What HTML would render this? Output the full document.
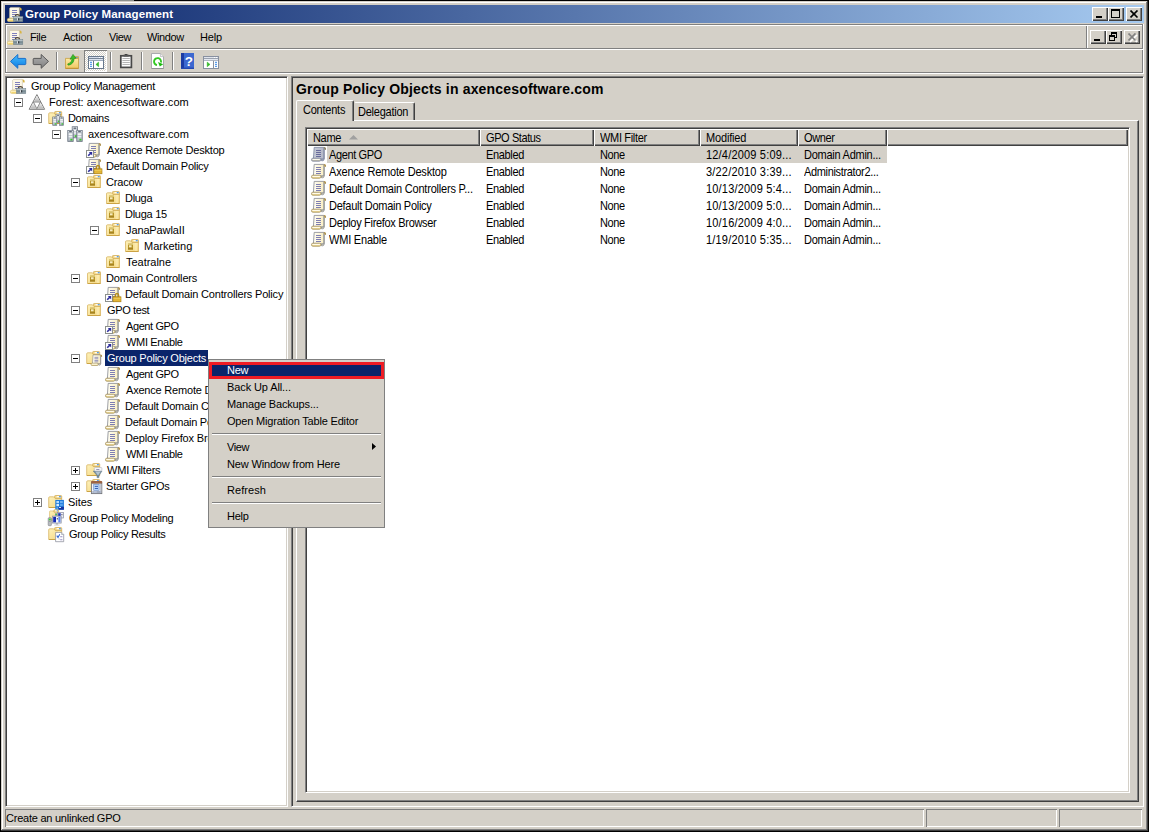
<!DOCTYPE html>
<html lang="en"><head><meta charset="utf-8"><title>Group Policy Management</title>
<style>
html,body{margin:0;padding:0}
body{width:1149px;height:832px;background:#000;position:relative;overflow:hidden;font-family:"Liberation Sans",sans-serif;font-size:11px;color:#000}
div,span.t,i,.ic{position:absolute}
i{display:block}
.ic svg{display:block;overflow:visible}
.t{white-space:pre;display:block}
.ui{font-size:11px}
.ls{font-size:11px;transform:scaleY(1.125);transform-origin:0 12.4px}
.tb{font-size:11.5px;font-weight:bold}
.hd{font-size:14px;font-weight:bold}
</style></head>
<body>
<div style="left:1px;top:1px;width:1147px;height:830px;background:#d4d0c8"></div>
<div style="left:1px;top:1px;width:1146px;height:1px;background:#d4d0c8"></div>
<div style="left:1px;top:1px;width:1px;height:829px;background:#d4d0c8"></div>
<div style="left:2px;top:2px;width:1144px;height:1px;background:#ffffff"></div>
<div style="left:2px;top:2px;width:1px;height:827px;background:#ffffff"></div>
<div style="left:1px;top:830px;width:1147px;height:1px;background:#404040"></div>
<div style="left:1147px;top:1px;width:1px;height:830px;background:#404040"></div>
<div style="left:2px;top:829px;width:1145px;height:1px;background:#808080"></div>
<div style="left:1146px;top:2px;width:1px;height:828px;background:#808080"></div>
<div style="left:110px;top:0px;width:24px;height:1px;background:#8e928e"></div>
<div style="left:5px;top:5px;width:1139px;height:18px;background:linear-gradient(to right,#0a246a,#a6caf0)"></div>
<div class="ic" style="left:7px;top:7px"><svg width="16" height="16" viewBox="0 0 16 16" ><path d="M2.6,1.2 L3.6,0.4 L12.4,0.4 L12.4,11 L2.6,11 Z" fill="#fdf8e6" stroke="#c8c0a4" stroke-width="0.6"/><path d="M12.5,0.6 Q15,0.4 14.6,3.4 L13.2,3.6 Z" fill="#d8b444"/><rect x="5" y="3" width="5" height="1" fill="#8080bc" /><rect x="5" y="5" width="5" height="1" fill="#8080bc" /><rect x="5" y="7" width="5" height="1" fill="#8080bc" /><rect x="5" y="9" width="5" height="1" fill="#8080bc" /><rect x="0.3" y="11.3" width="8" height="3.2" rx="1.5" fill="#fbeeb8" stroke="#d8c070" stroke-width="0.6"/><rect x="1.4" y="13.2" width="5" height="0.9" fill="#f0d060" /><path d="M8.2,9.4 Q8.4,7.7 10.4,7.7 Q12.4,7.7 12.6,9.4" fill="none" stroke="#4c4030" stroke-width="1.2"/><rect x="6.4" y="9.6" width="9.4" height="5" fill="#8c9ca4" stroke="#6c7c84" stroke-width="0.5"/><rect x="6.6" y="9.8" width="9" height="1.3" fill="#b4c0c6" /><rect x="6.6" y="11.6" width="9" height="1" fill="#70828a" /><rect x="10.2" y="11.2" width="1" height="2.2" fill="#f8f8f8" /><rect x="11.2" y="11.2" width="1" height="2.2" fill="#202428" /></svg></div>
<span class="t tb" style="left:25px;top:5px;height:18px;line-height:18px;letter-spacing:0.136px;color:#fff;">Group Policy Management</span>
<div style="left:1092px;top:7px;width:16px;height:14px;background:#d4d0c8;box-shadow:inset 1px 1px 0 #ffffff,inset -1px -1px 0 #404040,inset -2px -2px 0 #808080"><i style="left:4px;top:9px;width:6px;height:2px;background:#000"></i></div>
<div style="left:1108px;top:7px;width:16px;height:14px;background:#d4d0c8;box-shadow:inset 1px 1px 0 #ffffff,inset -1px -1px 0 #404040,inset -2px -2px 0 #808080"><i style="left:3px;top:2px;width:9px;height:9px;box-sizing:border-box;border:1px solid #000;border-top-width:2px"></i></div>
<div style="left:1126px;top:7px;width:16px;height:14px;background:#d4d0c8;box-shadow:inset 1px 1px 0 #ffffff,inset -1px -1px 0 #404040,inset -2px -2px 0 #808080"><svg style="position:absolute;left:4px;top:3px" width="10" height="10" viewBox="0 0 10 10"><path d="M0.5,0.5 L7.5,7.5 M7.5,0.5 L0.5,7.5" stroke="#000" stroke-width="1.7"/></svg></div>
<div style="left:1090px;top:30px;width:16px;height:14px;background:#d4d0c8;box-shadow:inset 1px 1px 0 #ffffff,inset -1px -1px 0 #404040,inset -2px -2px 0 #808080"><i style="left:4px;top:9px;width:6px;height:2px;background:#000"></i></div>
<div style="left:1106px;top:30px;width:16px;height:14px;background:#d4d0c8;box-shadow:inset 1px 1px 0 #ffffff,inset -1px -1px 0 #404040,inset -2px -2px 0 #808080"><i style="left:5px;top:2px;width:6px;height:6px;box-sizing:border-box;border:1px solid #000;border-top-width:2px"></i><i style="left:3px;top:5px;width:6px;height:6px;box-sizing:border-box;border:1px solid #000;border-top-width:2px;background:#d4d0c8"></i></div>
<div style="left:1124px;top:30px;width:16px;height:14px;background:#d4d0c8;box-shadow:inset 1px 1px 0 #ffffff,inset -1px -1px 0 #404040,inset -2px -2px 0 #808080"><svg style="position:absolute;left:4px;top:3px" width="10" height="10" viewBox="0 0 10 10"><path d="M1,1 L8,8 M8,1 L1,8" stroke="#fff" stroke-width="1.6" transform="translate(1,1)"/><path d="M0.5,0.5 L7.5,7.5 M7.5,0.5 L0.5,7.5" stroke="#808080" stroke-width="1.7"/></svg></div>
<div style="left:5px;top:24px;width:1139px;height:1px;background:#808080"></div>
<div style="left:6px;top:25px;width:1137px;height:1px;background:#ffffff"></div>
<div style="left:5px;top:24px;width:1px;height:50px;background:#808080"></div>
<div style="left:6px;top:25px;width:1px;height:48px;background:#ffffff"></div>
<div style="left:1142px;top:25px;width:1px;height:48px;background:#808080"></div>
<div style="left:1143px;top:24px;width:1px;height:50px;background:#ffffff"></div>
<div style="left:6px;top:48px;width:1137px;height:1px;background:#808080"></div>
<div style="left:6px;top:49px;width:1137px;height:1px;background:#ffffff"></div>
<div style="left:6px;top:72px;width:1137px;height:1px;background:#808080"></div>
<div style="left:5px;top:73px;width:1139px;height:1px;background:#ffffff"></div>
<div style="left:1086px;top:26px;width:1px;height:22px;background:#808080"></div>
<div style="left:1087px;top:26px;width:1px;height:22px;background:#ffffff"></div>
<div class="ic" style="left:7px;top:30px"><svg width="16" height="16" viewBox="0 0 16 16" ><path d="M2.6,1.2 L3.6,0.4 L12.4,0.4 L12.4,11 L2.6,11 Z" fill="#fdf8e6" stroke="#c8c0a4" stroke-width="0.6"/><path d="M12.5,0.6 Q15,0.4 14.6,3.4 L13.2,3.6 Z" fill="#d8b444"/><rect x="5" y="3" width="5" height="1" fill="#8080bc" /><rect x="5" y="5" width="5" height="1" fill="#8080bc" /><rect x="5" y="7" width="5" height="1" fill="#8080bc" /><rect x="5" y="9" width="5" height="1" fill="#8080bc" /><rect x="0.3" y="11.3" width="8" height="3.2" rx="1.5" fill="#fbeeb8" stroke="#d8c070" stroke-width="0.6"/><rect x="1.4" y="13.2" width="5" height="0.9" fill="#f0d060" /><path d="M8.2,9.4 Q8.4,7.7 10.4,7.7 Q12.4,7.7 12.6,9.4" fill="none" stroke="#4c4030" stroke-width="1.2"/><rect x="6.4" y="9.6" width="9.4" height="5" fill="#8c9ca4" stroke="#6c7c84" stroke-width="0.5"/><rect x="6.6" y="9.8" width="9" height="1.3" fill="#b4c0c6" /><rect x="6.6" y="11.6" width="9" height="1" fill="#70828a" /><rect x="10.2" y="11.2" width="1" height="2.2" fill="#f8f8f8" /><rect x="11.2" y="11.2" width="1" height="2.2" fill="#202428" /></svg></div>
<span class="t ui" style="left:30px;top:29px;height:16px;line-height:16px;letter-spacing:-0.400px;">File</span>
<span class="t ui" style="left:63px;top:29px;height:16px;line-height:16px;letter-spacing:-0.240px;">Action</span>
<span class="t ui" style="left:109px;top:29px;height:16px;line-height:16px;letter-spacing:-0.400px;">View</span>
<span class="t ui" style="left:147px;top:29px;height:16px;line-height:16px;letter-spacing:-0.400px;">Window</span>
<span class="t ui" style="left:200px;top:29px;height:16px;line-height:16px;letter-spacing:-0.200px;">Help</span>
<div class="ic" style="left:10px;top:54px"><svg width="17" height="15" viewBox="0 0 17 15" ><defs><linearGradient id="al48bcfc" x1="0" y1="0" x2="0" y2="1"><stop offset="0" stop-color="#48bcfc"/><stop offset="1" stop-color="#0a7ce4"/></linearGradient></defs><path d="M0.5,7.4 L7.8,0.5 L7.8,4.4 L15,4.4 Q15.8,4.4 15.8,5.2 L15.8,9.8 Q15.8,10.6 15,10.6 L7.8,10.6 L7.8,14.3 Z" fill="url(#al48bcfc)" stroke="#1870cc" stroke-width="1" stroke-linejoin="round"/></svg></div>
<div class="ic" style="left:32px;top:54px"><svg width="17" height="15" viewBox="0 0 17 15" ><g transform="translate(17,0) scale(-1,1)"><defs><linearGradient id="alb0b0b0" x1="0" y1="0" x2="0" y2="1"><stop offset="0" stop-color="#b0b0b0"/><stop offset="1" stop-color="#808080"/></linearGradient></defs><path d="M0.5,7.4 L7.8,0.5 L7.8,4.4 L15,4.4 Q15.8,4.4 15.8,5.2 L15.8,9.8 Q15.8,10.6 15,10.6 L7.8,10.6 L7.8,14.3 Z" fill="url(#alb0b0b0)" stroke="#585858" stroke-width="1" stroke-linejoin="round"/></g></svg></div>
<div style="left:56px;top:52px;width:1px;height:18px;background:#808080"></div>
<div style="left:57px;top:52px;width:1px;height:18px;background:#ffffff"></div>
<div class="ic" style="left:65px;top:54px"><svg width="14" height="15" viewBox="0 0 14 15" ><defs><linearGradient id="uf" x1="0" y1="0" x2="0" y2="1"><stop offset="0" stop-color="#fce9a4"/><stop offset="1" stop-color="#f0c860"/></linearGradient></defs><path d="M8,2.6 L13.5,2.6 L13.5,5 L8,5 Z" fill="#e8c460" stroke="#c09838" stroke-width="0.6"/><rect x="10.4" y="3.2" width="2.4" height="1" fill="#5090e0" /><path d="M0.5,4.4 L13.5,4.4 L13.5,14.5 L0.5,14.5 Z" fill="url(#uf)" stroke="#c8a040" stroke-width="0.8"/><rect x="0.6" y="13.8" width="12.8" height="1" fill="#c09030" /><path d="M2.6,10 Q6.6,9.4 7.2,4.8 L5,5.2 L8,0.4 L11,4.2 L9.2,4.4 Q8.8,10.2 3.4,11.2 Z" fill="#38c028" stroke="#208818" stroke-width="0.6"/></svg></div>
<div style="left:84px;top:50px;width:23px;height:22px;background:conic-gradient(#fff 25%,#d4d0c8 0 50%,#fff 0 75%,#d4d0c8 0) 0 0/2px 2px;box-shadow:inset 1px 1px 0 #808080,inset -1px -1px 0 #ffffff"></div>
<div class="ic" style="left:88px;top:56px"><svg width="16" height="13" viewBox="0 0 16 13" ><rect x="0.5" y="0.5" width="15" height="12" fill="#ffffff" stroke="#68788c" stroke-width="1"/><rect x="1" y="1" width="14" height="1.2" fill="#d4dcec" /><rect x="1" y="2.1" width="14" height="0.9" fill="#68788c" /><rect x="11" y="1" width="1" height="1" fill="#ffffff" /><rect x="13" y="1" width="1" height="1" fill="#ffffff" /><rect x="1" y="3" width="14" height="1" fill="#dce4f0" /><rect x="1" y="4" width="14" height="0.8" fill="#8494ac" /><rect x="5" y="4.8" width="1" height="7.4" fill="#68788c" /><rect x="2" y="5.8" width="2" height="1" fill="#3484e4" /><rect x="2" y="7.8" width="2" height="1" fill="#3484e4" /><rect x="2" y="9.8" width="2" height="1" fill="#3484e4" /><path d="M10.6,6.1 L10.6,10.7 L7.9,8.4 Z" fill="#34b828" stroke="#34b828" stroke-width="0.5" stroke-linejoin="round"/></svg></div>
<div style="left:110px;top:52px;width:1px;height:18px;background:#808080"></div>
<div style="left:111px;top:52px;width:1px;height:18px;background:#ffffff"></div>
<div class="ic" style="left:120px;top:54px"><svg width="12" height="14" viewBox="0 0 12 14" ><rect x="0.8" y="1.8" width="10.6" height="11.6" fill="#fcfcfc" stroke="#484848" stroke-width="1.7"/><rect x="3.6" y="0.6" width="5" height="2" fill="#585858" /><rect x="4.8" y="0" width="2.6" height="1" fill="#404040" /><rect x="2.4" y="4" width="7.4" height="1" fill="#b4b4b4" /><rect x="2.4" y="6" width="7.4" height="1" fill="#b4b4b4" /><rect x="2.4" y="8" width="7.4" height="1" fill="#b4b4b4" /><rect x="2.4" y="10" width="7.4" height="1" fill="#b4b4b4" /></svg></div>
<div style="left:141px;top:52px;width:1px;height:18px;background:#808080"></div>
<div style="left:142px;top:52px;width:1px;height:18px;background:#ffffff"></div>
<div class="ic" style="left:151px;top:53px"><svg width="13" height="16" viewBox="0 0 13 16" ><path d="M0.5,0.5 L9.4,0.5 L12.5,3.6 L12.5,15.5 L0.5,15.5 Z" fill="#ffffff" stroke="#a4a4a8" stroke-width="0.9"/><path d="M9.4,0.5 L9.4,3.6 L12.5,3.6" fill="#f0f0f0" stroke="#b0b0b4" stroke-width="0.7"/><rect x="0.6" y="15" width="12" height="0.9" fill="#8c8c90" /><path d="M6.0,12.05 A3.5,3.5 0 1 1 9.9,9.6" fill="none" stroke="#34c824" stroke-width="1.9"/><path d="M7.0,9.0 L12.2,11.2 L8.8,13.4 Z" fill="#1cb810"/></svg></div>
<div style="left:172px;top:52px;width:1px;height:18px;background:#808080"></div>
<div style="left:173px;top:52px;width:1px;height:18px;background:#ffffff"></div>
<div class="ic" style="left:181px;top:53px"><svg width="13" height="16" viewBox="0 0 13 16" ><rect x="0" y="0" width="13" height="16" fill="#3c68d0" /><rect x="0" y="0" width="3" height="16" fill="#1c3ca4" /><rect x="0" y="14.6" width="13" height="1.4" fill="#2448b0" /><text x="7.8" y="12.6" font-family="Liberation Sans, sans-serif" font-weight="bold" font-size="13.5" fill="#ffffff" text-anchor="middle">?</text></svg></div>
<div class="ic" style="left:203px;top:56px"><svg width="16" height="13" viewBox="0 0 16 13" ><rect x="0.5" y="0.5" width="15" height="12" fill="#ffffff" stroke="#8890a0" stroke-width="1"/><rect x="1" y="1" width="14" height="1.2" fill="#e0e4ec" /><rect x="1" y="2.1" width="14" height="0.9" fill="#9098a8" /><rect x="11" y="1" width="1" height="1" fill="#ffffff" /><rect x="13" y="1" width="1" height="1" fill="#ffffff" /><rect x="1" y="3" width="14" height="1" fill="#e4e8f0" /><rect x="1" y="4" width="14" height="0.8" fill="#a0a8b8" /><rect x="10" y="4.8" width="1" height="7.4" fill="#8890a0" /><rect x="12" y="5.8" width="2" height="1" fill="#3484e4" /><rect x="12" y="7.8" width="2" height="1" fill="#3484e4" /><rect x="12" y="9.8" width="2" height="1" fill="#3484e4" /><path d="M4.2,6.1 L4.2,10.7 L7,8.4 Z" fill="#34b828" stroke="#34b828" stroke-width="0.5" stroke-linejoin="round"/></svg></div>
<div style="left:5px;top:76px;width:283px;height:731px;background:#fff;box-sizing:border-box;border:1px solid;border-color:#808080 #ffffff #ffffff #808080;box-shadow:inset 1px 1px 0 #404040,inset -1px -1px 0 #d4d0c8"></div>
<div class="ic" style="left:10px;top:79px"><svg width="16" height="16" viewBox="0 0 16 16" ><path d="M2.6,1.2 L3.6,0.4 L12.4,0.4 L12.4,11 L2.6,11 Z" fill="#fdf8e6" stroke="#c8c0a4" stroke-width="0.6"/><path d="M12.5,0.6 Q15,0.4 14.6,3.4 L13.2,3.6 Z" fill="#d8b444"/><rect x="5" y="3" width="5" height="1" fill="#8080bc" /><rect x="5" y="5" width="5" height="1" fill="#8080bc" /><rect x="5" y="7" width="5" height="1" fill="#8080bc" /><rect x="5" y="9" width="5" height="1" fill="#8080bc" /><rect x="0.3" y="11.3" width="8" height="3.2" rx="1.5" fill="#fbeeb8" stroke="#d8c070" stroke-width="0.6"/><rect x="1.4" y="13.2" width="5" height="0.9" fill="#f0d060" /><path d="M8.2,9.4 Q8.4,7.7 10.4,7.7 Q12.4,7.7 12.6,9.4" fill="none" stroke="#4c4030" stroke-width="1.2"/><rect x="6.4" y="9.6" width="9.4" height="5" fill="#8c9ca4" stroke="#6c7c84" stroke-width="0.5"/><rect x="6.6" y="9.8" width="9" height="1.3" fill="#b4c0c6" /><rect x="6.6" y="11.6" width="9" height="1" fill="#70828a" /><rect x="10.2" y="11.2" width="1" height="2.2" fill="#f8f8f8" /><rect x="11.2" y="11.2" width="1" height="2.2" fill="#202428" /></svg></div>
<span class="t ui" style="left:31px;top:78px;height:16px;line-height:16px;letter-spacing:-0.273px;">Group Policy Management</span>
<div style="left:14px;top:98px;width:9px;height:9px;box-sizing:border-box;border:1px solid #808080;background:#fff"><i style="left:1px;top:3px;width:5px;height:1px;background:#000"></i></div>
<div class="ic" style="left:29px;top:94px"><svg width="16" height="16" viewBox="0 0 16 16" ><defs><linearGradient id="tg" x1="0" y1="0" x2="0" y2="1"><stop offset="0" stop-color="#f6f6f6"/><stop offset="1" stop-color="#b4b4b4"/></linearGradient></defs><path d="M7.9,0.6 L15.6,15.3 L0.2,15.3 Z" fill="#ffffff" stroke="#787878" stroke-width="1" stroke-linejoin="round"/><path d="M7.9,1.8 L10.9,7.5 L4.9,7.5 Z" fill="url(#tg)"/><path d="M4.3,8.6 L7.3,14.7 L1.2,14.7 Z" fill="url(#tg)"/><path d="M11.5,8.6 L14.6,14.7 L8.5,14.7 Z" fill="url(#tg)"/><path d="M4.4,8 L11.4,8 L7.9,14.8 Z" fill="#ffffff" stroke="#7c7c7c" stroke-width="0.9" stroke-linejoin="round"/></svg></div>
<span class="t ui" style="left:49px;top:94px;height:16px;line-height:16px;letter-spacing:0.064px;">Forest: axencesoftware.com</span>
<div style="left:33px;top:114px;width:9px;height:9px;box-sizing:border-box;border:1px solid #808080;background:#fff"><i style="left:1px;top:3px;width:5px;height:1px;background:#000"></i></div>
<div class="ic" style="left:48px;top:110px"><svg width="16" height="16" viewBox="0 0 16 16" ><defs><linearGradient id="fg" x1="0" y1="0" x2="1" y2="1"><stop offset="0" stop-color="#fef2bc"/><stop offset="1" stop-color="#f4d67e"/></linearGradient></defs><g transform="translate(0.2,1)"><path d="M6.4,3.4 L6.4,1.2 Q6.4,0.5 7.2,0.5 L12.6,0.5 Q13.5,0.5 13.5,1.4 L13.5,3.6 Z" fill="#f3d684" stroke="#cfa850" stroke-width="0.7"/><rect x="8.4" y="1.1" width="4.2" height="1.2" fill="#ffffff" /><rect x="10.8" y="1.1" width="1.9" height="1.2" fill="#4a94e6" /><path d="M0.5,2.8 Q0.5,1.8 1.5,1.8 L5.4,1.8 L7,3.5 L13.5,3.5 L13.5,12.5 L0.5,12.5 Z" fill="url(#fg)" stroke="#d3ac54" stroke-width="0.7"/><rect x="9.6" y="4" width="2.4" height="8" fill="#fff4c8" opacity="0.45"/><rect x="0.8" y="12.1" width="12.6" height="0.9" fill="#c9a040" /></g><g transform="translate(4.4,4.2) scale(0.76)"><rect x="4.8" y="0" width="5.4" height="11" fill="#bcc4cc" stroke="#66707c" stroke-width="0.8"/><rect x="5.2" y="0.4" width="4.6" height="1.4" fill="#dfe3e8" /><rect x="6.199999999999999" y="0.9" width="2.6" height="0.9" fill="#2c3844" /><rect x="5.7" y="3" width="3.6" height="1.5" fill="#fafbfc" /><rect x="5.7" y="5.4" width="3.6" height="1.5" fill="#eef0f3" /><rect x="7.4" y="8.4" width="2" height="2" fill="#34d422" /><rect x="5.2" y="10.1" width="4.6" height="0.9" fill="#8e98a4" /><rect x="0.4" y="3.6" width="5.4" height="11" fill="#bcc4cc" stroke="#66707c" stroke-width="0.8"/><rect x="0.8" y="4.0" width="4.6" height="1.4" fill="#dfe3e8" /><rect x="1.7999999999999998" y="4.5" width="2.6" height="0.9" fill="#2c3844" /><rect x="1.3" y="6.6" width="3.6" height="1.5" fill="#fafbfc" /><rect x="1.3" y="9.0" width="3.6" height="1.5" fill="#eef0f3" /><rect x="3.0" y="12.0" width="2" height="2" fill="#34d422" /><rect x="0.8" y="13.7" width="4.6" height="0.9" fill="#8e98a4" /><rect x="9.4" y="3.6" width="5.4" height="11" fill="#bcc4cc" stroke="#66707c" stroke-width="0.8"/><rect x="9.8" y="4.0" width="4.6" height="1.4" fill="#dfe3e8" /><rect x="10.8" y="4.5" width="2.6" height="0.9" fill="#2c3844" /><rect x="10.3" y="6.6" width="3.6" height="1.5" fill="#fafbfc" /><rect x="10.3" y="9.0" width="3.6" height="1.5" fill="#eef0f3" /><rect x="12.0" y="12.0" width="2" height="2" fill="#34d422" /><rect x="9.8" y="13.7" width="4.6" height="0.9" fill="#8e98a4" /></g></svg></div>
<span class="t ui" style="left:68px;top:110px;height:16px;line-height:16px;letter-spacing:-0.333px;">Domains</span>
<div style="left:52px;top:130px;width:9px;height:9px;box-sizing:border-box;border:1px solid #808080;background:#fff"><i style="left:1px;top:3px;width:5px;height:1px;background:#000"></i></div>
<div class="ic" style="left:67px;top:126px"><svg width="16" height="16" viewBox="0 0 16 16" ><g transform="translate(0.4,0.8) scale(1.0)"><rect x="4.8" y="0" width="5.4" height="11" fill="#bcc4cc" stroke="#66707c" stroke-width="0.8"/><rect x="5.2" y="0.4" width="4.6" height="1.4" fill="#dfe3e8" /><rect x="6.199999999999999" y="0.9" width="2.6" height="0.9" fill="#2c3844" /><rect x="5.7" y="3" width="3.6" height="1.5" fill="#fafbfc" /><rect x="5.7" y="5.4" width="3.6" height="1.5" fill="#eef0f3" /><rect x="7.4" y="8.4" width="2" height="2" fill="#34d422" /><rect x="5.2" y="10.1" width="4.6" height="0.9" fill="#8e98a4" /><rect x="0.4" y="3.6" width="5.4" height="11" fill="#bcc4cc" stroke="#66707c" stroke-width="0.8"/><rect x="0.8" y="4.0" width="4.6" height="1.4" fill="#dfe3e8" /><rect x="1.7999999999999998" y="4.5" width="2.6" height="0.9" fill="#2c3844" /><rect x="1.3" y="6.6" width="3.6" height="1.5" fill="#fafbfc" /><rect x="1.3" y="9.0" width="3.6" height="1.5" fill="#eef0f3" /><rect x="3.0" y="12.0" width="2" height="2" fill="#34d422" /><rect x="0.8" y="13.7" width="4.6" height="0.9" fill="#8e98a4" /><rect x="9.4" y="3.6" width="5.4" height="11" fill="#bcc4cc" stroke="#66707c" stroke-width="0.8"/><rect x="9.8" y="4.0" width="4.6" height="1.4" fill="#dfe3e8" /><rect x="10.8" y="4.5" width="2.6" height="0.9" fill="#2c3844" /><rect x="10.3" y="6.6" width="3.6" height="1.5" fill="#fafbfc" /><rect x="10.3" y="9.0" width="3.6" height="1.5" fill="#eef0f3" /><rect x="12.0" y="12.0" width="2" height="2" fill="#34d422" /><rect x="9.8" y="13.7" width="4.6" height="0.9" fill="#8e98a4" /></g></svg></div>
<span class="t ui" style="left:88px;top:126px;height:16px;line-height:16px;">axencesoftware.com</span>
<div class="ic" style="left:86px;top:142px"><svg width="16" height="16" viewBox="0 0 16 16" ><defs><linearGradient id="sp3" x1="0" y1="0" x2="1" y2="0"><stop offset="0" stop-color="#fffef6"/><stop offset="1" stop-color="#faeec2"/></linearGradient><linearGradient id="sr3" x1="0" y1="0" x2="0" y2="1"><stop offset="0" stop-color="#fff9dc"/><stop offset="1" stop-color="#efd684"/></linearGradient></defs><g transform="translate(0,0) scale(1.0)"><path d="M12.6,3.4 L13.3,3.4 L13.3,13 Q13.1,15 10.8,15 L9.8,13 L12.6,13 Z" fill="#e6dfc6" stroke="#84868e" stroke-width="0.7"/><path d="M3.2,1.4 L12.8,1.4 L12.8,12.8 L2.4,12.8 Z" fill="url(#sp3)" stroke="#84868e" stroke-width="0.8"/><path d="M12.8,1.0 Q15.4,0.8 15,3.8 L13.6,4 Q14,2.6 12.8,2.4 Z" fill="#b09452"/><rect x="5" y="4" width="5" height="1" fill="#7e7eb2" /><rect x="5" y="6" width="5" height="1" fill="#7e7eb2" /><rect x="5" y="8" width="5" height="1" fill="#7e7eb2" /><rect x="5" y="10" width="5" height="1" fill="#7e7eb2" /><rect x="0.5" y="12.2" width="9.4" height="3" rx="1.4" fill="url(#sr3)" stroke="#a08c58" stroke-width="0.8"/><rect x="1.6" y="13" width="7.2" height="0.9" fill="#fffdf0" /></g><rect x="0.5" y="8.5" width="7" height="7" fill="#ffffff" stroke="#8c908c" stroke-width="1"/><path d="M2.2,13.8 L5,11" stroke="#2c2c9c" stroke-width="1.6" fill="none"/><path d="M2.8,10 L6.2,10 L6.2,13.4 Z" fill="#2c2c9c"/></svg></div>
<span class="t ui" style="left:107px;top:142px;height:16px;line-height:16px;letter-spacing:-0.200px;">Axence Remote Desktop</span>
<div class="ic" style="left:86px;top:158px"><svg width="16" height="16" viewBox="0 0 16 16" ><defs><linearGradient id="sp4" x1="0" y1="0" x2="1" y2="0"><stop offset="0" stop-color="#fffef6"/><stop offset="1" stop-color="#faeec2"/></linearGradient><linearGradient id="sr4" x1="0" y1="0" x2="0" y2="1"><stop offset="0" stop-color="#fff9dc"/><stop offset="1" stop-color="#efd684"/></linearGradient></defs><g transform="translate(0,0) scale(1.0)"><path d="M12.6,3.4 L13.3,3.4 L13.3,13 Q13.1,15 10.8,15 L9.8,13 L12.6,13 Z" fill="#e6dfc6" stroke="#84868e" stroke-width="0.7"/><path d="M3.2,1.4 L12.8,1.4 L12.8,12.8 L2.4,12.8 Z" fill="url(#sp4)" stroke="#84868e" stroke-width="0.8"/><path d="M12.8,1.0 Q15.4,0.8 15,3.8 L13.6,4 Q14,2.6 12.8,2.4 Z" fill="#b09452"/><rect x="5" y="4" width="5" height="1" fill="#7e7eb2" /><rect x="5" y="6" width="5" height="1" fill="#7e7eb2" /><rect x="5" y="8" width="5" height="1" fill="#7e7eb2" /><rect x="5" y="10" width="5" height="1" fill="#7e7eb2" /><rect x="0.5" y="12.2" width="9.4" height="3" rx="1.4" fill="url(#sr4)" stroke="#a08c58" stroke-width="0.8"/><rect x="1.6" y="13" width="7.2" height="0.9" fill="#fffdf0" /></g><rect x="0.5" y="8.5" width="7" height="7" fill="#ffffff" stroke="#8c908c" stroke-width="1"/><path d="M2.2,13.8 L5,11" stroke="#2c2c9c" stroke-width="1.6" fill="none"/><path d="M2.8,10 L6.2,10 L6.2,13.4 Z" fill="#2c2c9c"/><path d="M10.4,11 L10.4,9.2 Q10.4,7.4 12,7.4 Q13.6,7.4 13.6,9.2 L13.6,11" fill="none" stroke="#b48c1c" stroke-width="1.5"/><rect x="8" y="10.8" width="8" height="5" fill="#d8a424" stroke="#a47c14" stroke-width="0.6"/><rect x="8.4" y="11.8" width="7.2" height="0.9" fill="#f4d868" /><rect x="8.4" y="13.6" width="7.2" height="0.9" fill="#f0cc50" /></svg></div>
<span class="t ui" style="left:106px;top:158px;height:16px;line-height:16px;letter-spacing:-0.270px;">Default Domain Policy</span>
<div style="left:71px;top:178px;width:9px;height:9px;box-sizing:border-box;border:1px solid #808080;background:#fff"><i style="left:1px;top:3px;width:5px;height:1px;background:#000"></i></div>
<div class="ic" style="left:86px;top:174px"><svg width="16" height="16" viewBox="0 0 16 16" ><defs><linearGradient id="fg" x1="0" y1="0" x2="1" y2="1"><stop offset="0" stop-color="#fef2bc"/><stop offset="1" stop-color="#f4d67e"/></linearGradient></defs><g transform="translate(1,1)"><path d="M6.4,3.4 L6.4,1.2 Q6.4,0.5 7.2,0.5 L12.6,0.5 Q13.5,0.5 13.5,1.4 L13.5,3.6 Z" fill="#f3d684" stroke="#cfa850" stroke-width="0.7"/><rect x="8.4" y="1.1" width="4.2" height="1.2" fill="#ffffff" /><rect x="10.8" y="1.1" width="1.9" height="1.2" fill="#4a94e6" /><path d="M0.5,2.8 Q0.5,1.8 1.5,1.8 L5.4,1.8 L7,3.5 L13.5,3.5 L13.5,12.5 L0.5,12.5 Z" fill="url(#fg)" stroke="#d3ac54" stroke-width="0.7"/><rect x="9.6" y="4" width="2.4" height="8" fill="#fff4c8" opacity="0.45"/><rect x="0.8" y="12.1" width="12.6" height="0.9" fill="#c9a040" /></g><rect x="4" y="5.5" width="5" height="6" fill="#b8962a" /><rect x="4" y="5.5" width="5" height="1.2" fill="#e6d48c" /><path d="M5,7.3 L7.6,7.3 L7.6,9.3 L5,9.3 Z" fill="#f6ecc0"/><rect x="4" y="10.3" width="5" height="1.2" fill="#a07c1c" /></svg></div>
<span class="t ui" style="left:106px;top:174px;height:16px;line-height:16px;letter-spacing:-0.160px;">Cracow</span>
<div class="ic" style="left:105px;top:190px"><svg width="16" height="16" viewBox="0 0 16 16" ><defs><linearGradient id="fg" x1="0" y1="0" x2="1" y2="1"><stop offset="0" stop-color="#fef2bc"/><stop offset="1" stop-color="#f4d67e"/></linearGradient></defs><g transform="translate(1,1)"><path d="M6.4,3.4 L6.4,1.2 Q6.4,0.5 7.2,0.5 L12.6,0.5 Q13.5,0.5 13.5,1.4 L13.5,3.6 Z" fill="#f3d684" stroke="#cfa850" stroke-width="0.7"/><rect x="8.4" y="1.1" width="4.2" height="1.2" fill="#ffffff" /><rect x="10.8" y="1.1" width="1.9" height="1.2" fill="#4a94e6" /><path d="M0.5,2.8 Q0.5,1.8 1.5,1.8 L5.4,1.8 L7,3.5 L13.5,3.5 L13.5,12.5 L0.5,12.5 Z" fill="url(#fg)" stroke="#d3ac54" stroke-width="0.7"/><rect x="9.6" y="4" width="2.4" height="8" fill="#fff4c8" opacity="0.45"/><rect x="0.8" y="12.1" width="12.6" height="0.9" fill="#c9a040" /></g><rect x="4" y="5.5" width="5" height="6" fill="#b8962a" /><rect x="4" y="5.5" width="5" height="1.2" fill="#e6d48c" /><path d="M5,7.3 L7.6,7.3 L7.6,9.3 L5,9.3 Z" fill="#f6ecc0"/><rect x="4" y="10.3" width="5" height="1.2" fill="#a07c1c" /></svg></div>
<span class="t ui" style="left:125px;top:190px;height:16px;line-height:16px;letter-spacing:-0.300px;">Dluga</span>
<div class="ic" style="left:105px;top:206px"><svg width="16" height="16" viewBox="0 0 16 16" ><defs><linearGradient id="fg" x1="0" y1="0" x2="1" y2="1"><stop offset="0" stop-color="#fef2bc"/><stop offset="1" stop-color="#f4d67e"/></linearGradient></defs><g transform="translate(1,1)"><path d="M6.4,3.4 L6.4,1.2 Q6.4,0.5 7.2,0.5 L12.6,0.5 Q13.5,0.5 13.5,1.4 L13.5,3.6 Z" fill="#f3d684" stroke="#cfa850" stroke-width="0.7"/><rect x="8.4" y="1.1" width="4.2" height="1.2" fill="#ffffff" /><rect x="10.8" y="1.1" width="1.9" height="1.2" fill="#4a94e6" /><path d="M0.5,2.8 Q0.5,1.8 1.5,1.8 L5.4,1.8 L7,3.5 L13.5,3.5 L13.5,12.5 L0.5,12.5 Z" fill="url(#fg)" stroke="#d3ac54" stroke-width="0.7"/><rect x="9.6" y="4" width="2.4" height="8" fill="#fff4c8" opacity="0.45"/><rect x="0.8" y="12.1" width="12.6" height="0.9" fill="#c9a040" /></g><rect x="4" y="5.5" width="5" height="6" fill="#b8962a" /><rect x="4" y="5.5" width="5" height="1.2" fill="#e6d48c" /><path d="M5,7.3 L7.6,7.3 L7.6,9.3 L5,9.3 Z" fill="#f6ecc0"/><rect x="4" y="10.3" width="5" height="1.2" fill="#a07c1c" /></svg></div>
<span class="t ui" style="left:125px;top:206px;height:16px;line-height:16px;letter-spacing:-0.257px;">Dluga 15</span>
<div style="left:90px;top:226px;width:9px;height:9px;box-sizing:border-box;border:1px solid #808080;background:#fff"><i style="left:1px;top:3px;width:5px;height:1px;background:#000"></i></div>
<div class="ic" style="left:105px;top:222px"><svg width="16" height="16" viewBox="0 0 16 16" ><defs><linearGradient id="fg" x1="0" y1="0" x2="1" y2="1"><stop offset="0" stop-color="#fef2bc"/><stop offset="1" stop-color="#f4d67e"/></linearGradient></defs><g transform="translate(1,1)"><path d="M6.4,3.4 L6.4,1.2 Q6.4,0.5 7.2,0.5 L12.6,0.5 Q13.5,0.5 13.5,1.4 L13.5,3.6 Z" fill="#f3d684" stroke="#cfa850" stroke-width="0.7"/><rect x="8.4" y="1.1" width="4.2" height="1.2" fill="#ffffff" /><rect x="10.8" y="1.1" width="1.9" height="1.2" fill="#4a94e6" /><path d="M0.5,2.8 Q0.5,1.8 1.5,1.8 L5.4,1.8 L7,3.5 L13.5,3.5 L13.5,12.5 L0.5,12.5 Z" fill="url(#fg)" stroke="#d3ac54" stroke-width="0.7"/><rect x="9.6" y="4" width="2.4" height="8" fill="#fff4c8" opacity="0.45"/><rect x="0.8" y="12.1" width="12.6" height="0.9" fill="#c9a040" /></g><rect x="4" y="5.5" width="5" height="6" fill="#b8962a" /><rect x="4" y="5.5" width="5" height="1.2" fill="#e6d48c" /><path d="M5,7.3 L7.6,7.3 L7.6,9.3 L5,9.3 Z" fill="#f6ecc0"/><rect x="4" y="10.3" width="5" height="1.2" fill="#a07c1c" /></svg></div>
<span class="t ui" style="left:126px;top:222px;height:16px;line-height:16px;letter-spacing:-0.120px;">JanaPawlaII</span>
<div class="ic" style="left:124px;top:238px"><svg width="16" height="16" viewBox="0 0 16 16" ><defs><linearGradient id="fg" x1="0" y1="0" x2="1" y2="1"><stop offset="0" stop-color="#fef2bc"/><stop offset="1" stop-color="#f4d67e"/></linearGradient></defs><g transform="translate(1,1)"><path d="M6.4,3.4 L6.4,1.2 Q6.4,0.5 7.2,0.5 L12.6,0.5 Q13.5,0.5 13.5,1.4 L13.5,3.6 Z" fill="#f3d684" stroke="#cfa850" stroke-width="0.7"/><rect x="8.4" y="1.1" width="4.2" height="1.2" fill="#ffffff" /><rect x="10.8" y="1.1" width="1.9" height="1.2" fill="#4a94e6" /><path d="M0.5,2.8 Q0.5,1.8 1.5,1.8 L5.4,1.8 L7,3.5 L13.5,3.5 L13.5,12.5 L0.5,12.5 Z" fill="url(#fg)" stroke="#d3ac54" stroke-width="0.7"/><rect x="9.6" y="4" width="2.4" height="8" fill="#fff4c8" opacity="0.45"/><rect x="0.8" y="12.1" width="12.6" height="0.9" fill="#c9a040" /></g><rect x="4" y="5.5" width="5" height="6" fill="#b8962a" /><rect x="4" y="5.5" width="5" height="1.2" fill="#e6d48c" /><path d="M5,7.3 L7.6,7.3 L7.6,9.3 L5,9.3 Z" fill="#f6ecc0"/><rect x="4" y="10.3" width="5" height="1.2" fill="#a07c1c" /></svg></div>
<span class="t ui" style="left:144px;top:238px;height:16px;line-height:16px;">Marketing</span>
<div class="ic" style="left:105px;top:254px"><svg width="16" height="16" viewBox="0 0 16 16" ><defs><linearGradient id="fg" x1="0" y1="0" x2="1" y2="1"><stop offset="0" stop-color="#fef2bc"/><stop offset="1" stop-color="#f4d67e"/></linearGradient></defs><g transform="translate(1,1)"><path d="M6.4,3.4 L6.4,1.2 Q6.4,0.5 7.2,0.5 L12.6,0.5 Q13.5,0.5 13.5,1.4 L13.5,3.6 Z" fill="#f3d684" stroke="#cfa850" stroke-width="0.7"/><rect x="8.4" y="1.1" width="4.2" height="1.2" fill="#ffffff" /><rect x="10.8" y="1.1" width="1.9" height="1.2" fill="#4a94e6" /><path d="M0.5,2.8 Q0.5,1.8 1.5,1.8 L5.4,1.8 L7,3.5 L13.5,3.5 L13.5,12.5 L0.5,12.5 Z" fill="url(#fg)" stroke="#d3ac54" stroke-width="0.7"/><rect x="9.6" y="4" width="2.4" height="8" fill="#fff4c8" opacity="0.45"/><rect x="0.8" y="12.1" width="12.6" height="0.9" fill="#c9a040" /></g><rect x="4" y="5.5" width="5" height="6" fill="#b8962a" /><rect x="4" y="5.5" width="5" height="1.2" fill="#e6d48c" /><path d="M5,7.3 L7.6,7.3 L7.6,9.3 L5,9.3 Z" fill="#f6ecc0"/><rect x="4" y="10.3" width="5" height="1.2" fill="#a07c1c" /></svg></div>
<span class="t ui" style="left:126px;top:254px;height:16px;line-height:16px;letter-spacing:-0.025px;">Teatralne</span>
<div style="left:71px;top:274px;width:9px;height:9px;box-sizing:border-box;border:1px solid #808080;background:#fff"><i style="left:1px;top:3px;width:5px;height:1px;background:#000"></i></div>
<div class="ic" style="left:86px;top:270px"><svg width="16" height="16" viewBox="0 0 16 16" ><defs><linearGradient id="fg" x1="0" y1="0" x2="1" y2="1"><stop offset="0" stop-color="#fef2bc"/><stop offset="1" stop-color="#f4d67e"/></linearGradient></defs><g transform="translate(1,1)"><path d="M6.4,3.4 L6.4,1.2 Q6.4,0.5 7.2,0.5 L12.6,0.5 Q13.5,0.5 13.5,1.4 L13.5,3.6 Z" fill="#f3d684" stroke="#cfa850" stroke-width="0.7"/><rect x="8.4" y="1.1" width="4.2" height="1.2" fill="#ffffff" /><rect x="10.8" y="1.1" width="1.9" height="1.2" fill="#4a94e6" /><path d="M0.5,2.8 Q0.5,1.8 1.5,1.8 L5.4,1.8 L7,3.5 L13.5,3.5 L13.5,12.5 L0.5,12.5 Z" fill="url(#fg)" stroke="#d3ac54" stroke-width="0.7"/><rect x="9.6" y="4" width="2.4" height="8" fill="#fff4c8" opacity="0.45"/><rect x="0.8" y="12.1" width="12.6" height="0.9" fill="#c9a040" /></g><rect x="4" y="5.5" width="5" height="6" fill="#b8962a" /><rect x="4" y="5.5" width="5" height="1.2" fill="#e6d48c" /><path d="M5,7.3 L7.6,7.3 L7.6,9.3 L5,9.3 Z" fill="#f6ecc0"/><rect x="4" y="10.3" width="5" height="1.2" fill="#a07c1c" /></svg></div>
<span class="t ui" style="left:106px;top:270px;height:16px;line-height:16px;letter-spacing:-0.165px;">Domain Controllers</span>
<div class="ic" style="left:105px;top:286px"><svg width="16" height="16" viewBox="0 0 16 16" ><defs><linearGradient id="sp4" x1="0" y1="0" x2="1" y2="0"><stop offset="0" stop-color="#fffef6"/><stop offset="1" stop-color="#faeec2"/></linearGradient><linearGradient id="sr4" x1="0" y1="0" x2="0" y2="1"><stop offset="0" stop-color="#fff9dc"/><stop offset="1" stop-color="#efd684"/></linearGradient></defs><g transform="translate(0,0) scale(1.0)"><path d="M12.6,3.4 L13.3,3.4 L13.3,13 Q13.1,15 10.8,15 L9.8,13 L12.6,13 Z" fill="#e6dfc6" stroke="#84868e" stroke-width="0.7"/><path d="M3.2,1.4 L12.8,1.4 L12.8,12.8 L2.4,12.8 Z" fill="url(#sp4)" stroke="#84868e" stroke-width="0.8"/><path d="M12.8,1.0 Q15.4,0.8 15,3.8 L13.6,4 Q14,2.6 12.8,2.4 Z" fill="#b09452"/><rect x="5" y="4" width="5" height="1" fill="#7e7eb2" /><rect x="5" y="6" width="5" height="1" fill="#7e7eb2" /><rect x="5" y="8" width="5" height="1" fill="#7e7eb2" /><rect x="5" y="10" width="5" height="1" fill="#7e7eb2" /><rect x="0.5" y="12.2" width="9.4" height="3" rx="1.4" fill="url(#sr4)" stroke="#a08c58" stroke-width="0.8"/><rect x="1.6" y="13" width="7.2" height="0.9" fill="#fffdf0" /></g><rect x="0.5" y="8.5" width="7" height="7" fill="#ffffff" stroke="#8c908c" stroke-width="1"/><path d="M2.2,13.8 L5,11" stroke="#2c2c9c" stroke-width="1.6" fill="none"/><path d="M2.8,10 L6.2,10 L6.2,13.4 Z" fill="#2c2c9c"/><path d="M10.4,11 L10.4,9.2 Q10.4,7.4 12,7.4 Q13.6,7.4 13.6,9.2 L13.6,11" fill="none" stroke="#b48c1c" stroke-width="1.5"/><rect x="8" y="10.8" width="8" height="5" fill="#d8a424" stroke="#a47c14" stroke-width="0.6"/><rect x="8.4" y="11.8" width="7.2" height="0.9" fill="#f4d868" /><rect x="8.4" y="13.6" width="7.2" height="0.9" fill="#f0cc50" /></svg></div>
<span class="t ui" style="left:125px;top:286px;height:16px;line-height:16px;letter-spacing:-0.188px;">Default Domain Controllers Policy</span>
<div style="left:71px;top:306px;width:9px;height:9px;box-sizing:border-box;border:1px solid #808080;background:#fff"><i style="left:1px;top:3px;width:5px;height:1px;background:#000"></i></div>
<div class="ic" style="left:86px;top:302px"><svg width="16" height="16" viewBox="0 0 16 16" ><defs><linearGradient id="fg" x1="0" y1="0" x2="1" y2="1"><stop offset="0" stop-color="#fef2bc"/><stop offset="1" stop-color="#f4d67e"/></linearGradient></defs><g transform="translate(1,1)"><path d="M6.4,3.4 L6.4,1.2 Q6.4,0.5 7.2,0.5 L12.6,0.5 Q13.5,0.5 13.5,1.4 L13.5,3.6 Z" fill="#f3d684" stroke="#cfa850" stroke-width="0.7"/><rect x="8.4" y="1.1" width="4.2" height="1.2" fill="#ffffff" /><rect x="10.8" y="1.1" width="1.9" height="1.2" fill="#4a94e6" /><path d="M0.5,2.8 Q0.5,1.8 1.5,1.8 L5.4,1.8 L7,3.5 L13.5,3.5 L13.5,12.5 L0.5,12.5 Z" fill="url(#fg)" stroke="#d3ac54" stroke-width="0.7"/><rect x="9.6" y="4" width="2.4" height="8" fill="#fff4c8" opacity="0.45"/><rect x="0.8" y="12.1" width="12.6" height="0.9" fill="#c9a040" /></g><rect x="4" y="5.5" width="5" height="6" fill="#b8962a" /><rect x="4" y="5.5" width="5" height="1.2" fill="#e6d48c" /><path d="M5,7.3 L7.6,7.3 L7.6,9.3 L5,9.3 Z" fill="#f6ecc0"/><rect x="4" y="10.3" width="5" height="1.2" fill="#a07c1c" /></svg></div>
<span class="t ui" style="left:107px;top:302px;height:16px;line-height:16px;letter-spacing:-0.371px;">GPO test</span>
<div class="ic" style="left:105px;top:318px"><svg width="16" height="16" viewBox="0 0 16 16" ><defs><linearGradient id="sp3" x1="0" y1="0" x2="1" y2="0"><stop offset="0" stop-color="#fffef6"/><stop offset="1" stop-color="#faeec2"/></linearGradient><linearGradient id="sr3" x1="0" y1="0" x2="0" y2="1"><stop offset="0" stop-color="#fff9dc"/><stop offset="1" stop-color="#efd684"/></linearGradient></defs><g transform="translate(0,0) scale(1.0)"><path d="M12.6,3.4 L13.3,3.4 L13.3,13 Q13.1,15 10.8,15 L9.8,13 L12.6,13 Z" fill="#e6dfc6" stroke="#84868e" stroke-width="0.7"/><path d="M3.2,1.4 L12.8,1.4 L12.8,12.8 L2.4,12.8 Z" fill="url(#sp3)" stroke="#84868e" stroke-width="0.8"/><path d="M12.8,1.0 Q15.4,0.8 15,3.8 L13.6,4 Q14,2.6 12.8,2.4 Z" fill="#b09452"/><rect x="5" y="4" width="5" height="1" fill="#7e7eb2" /><rect x="5" y="6" width="5" height="1" fill="#7e7eb2" /><rect x="5" y="8" width="5" height="1" fill="#7e7eb2" /><rect x="5" y="10" width="5" height="1" fill="#7e7eb2" /><rect x="0.5" y="12.2" width="9.4" height="3" rx="1.4" fill="url(#sr3)" stroke="#a08c58" stroke-width="0.8"/><rect x="1.6" y="13" width="7.2" height="0.9" fill="#fffdf0" /></g><rect x="0.5" y="8.5" width="7" height="7" fill="#ffffff" stroke="#8c908c" stroke-width="1"/><path d="M2.2,13.8 L5,11" stroke="#2c2c9c" stroke-width="1.6" fill="none"/><path d="M2.8,10 L6.2,10 L6.2,13.4 Z" fill="#2c2c9c"/></svg></div>
<span class="t ui" style="left:126px;top:318px;height:16px;line-height:16px;letter-spacing:-0.400px;">Agent GPO</span>
<div class="ic" style="left:105px;top:334px"><svg width="16" height="16" viewBox="0 0 16 16" ><defs><linearGradient id="sp3" x1="0" y1="0" x2="1" y2="0"><stop offset="0" stop-color="#fffef6"/><stop offset="1" stop-color="#faeec2"/></linearGradient><linearGradient id="sr3" x1="0" y1="0" x2="0" y2="1"><stop offset="0" stop-color="#fff9dc"/><stop offset="1" stop-color="#efd684"/></linearGradient></defs><g transform="translate(0,0) scale(1.0)"><path d="M12.6,3.4 L13.3,3.4 L13.3,13 Q13.1,15 10.8,15 L9.8,13 L12.6,13 Z" fill="#e6dfc6" stroke="#84868e" stroke-width="0.7"/><path d="M3.2,1.4 L12.8,1.4 L12.8,12.8 L2.4,12.8 Z" fill="url(#sp3)" stroke="#84868e" stroke-width="0.8"/><path d="M12.8,1.0 Q15.4,0.8 15,3.8 L13.6,4 Q14,2.6 12.8,2.4 Z" fill="#b09452"/><rect x="5" y="4" width="5" height="1" fill="#7e7eb2" /><rect x="5" y="6" width="5" height="1" fill="#7e7eb2" /><rect x="5" y="8" width="5" height="1" fill="#7e7eb2" /><rect x="5" y="10" width="5" height="1" fill="#7e7eb2" /><rect x="0.5" y="12.2" width="9.4" height="3" rx="1.4" fill="url(#sr3)" stroke="#a08c58" stroke-width="0.8"/><rect x="1.6" y="13" width="7.2" height="0.9" fill="#fffdf0" /></g><rect x="0.5" y="8.5" width="7" height="7" fill="#ffffff" stroke="#8c908c" stroke-width="1"/><path d="M2.2,13.8 L5,11" stroke="#2c2c9c" stroke-width="1.6" fill="none"/><path d="M2.8,10 L6.2,10 L6.2,13.4 Z" fill="#2c2c9c"/></svg></div>
<span class="t ui" style="left:126px;top:334px;height:16px;line-height:16px;letter-spacing:-0.333px;">WMI Enable</span>
<div style="left:71px;top:354px;width:9px;height:9px;box-sizing:border-box;border:1px solid #808080;background:#fff"><i style="left:1px;top:3px;width:5px;height:1px;background:#000"></i></div>
<div class="ic" style="left:86px;top:350px"><svg width="16" height="16" viewBox="0 0 16 16" ><defs><linearGradient id="fg" x1="0" y1="0" x2="1" y2="1"><stop offset="0" stop-color="#fef2bc"/><stop offset="1" stop-color="#f4d67e"/></linearGradient></defs><g transform="translate(0.2,1)"><path d="M6.4,3.4 L6.4,1.2 Q6.4,0.5 7.2,0.5 L12.6,0.5 Q13.5,0.5 13.5,1.4 L13.5,3.6 Z" fill="#f3d684" stroke="#cfa850" stroke-width="0.7"/><rect x="8.4" y="1.1" width="4.2" height="1.2" fill="#ffffff" /><rect x="10.8" y="1.1" width="1.9" height="1.2" fill="#4a94e6" /><path d="M0.5,2.8 Q0.5,1.8 1.5,1.8 L5.4,1.8 L7,3.5 L13.5,3.5 L13.5,12.5 L0.5,12.5 Z" fill="url(#fg)" stroke="#d3ac54" stroke-width="0.7"/><rect x="9.6" y="4" width="2.4" height="8" fill="#fff4c8" opacity="0.45"/><rect x="0.8" y="12.1" width="12.6" height="0.9" fill="#c9a040" /></g><defs><linearGradient id="sp5" x1="0" y1="0" x2="1" y2="0"><stop offset="0" stop-color="#fffef6"/><stop offset="1" stop-color="#faeec2"/></linearGradient><linearGradient id="sr5" x1="0" y1="0" x2="0" y2="1"><stop offset="0" stop-color="#fff9dc"/><stop offset="1" stop-color="#efd684"/></linearGradient></defs><g transform="translate(4.6,3.8) scale(0.77)"><path d="M12.6,3.4 L13.3,3.4 L13.3,13 Q13.1,15 10.8,15 L9.8,13 L12.6,13 Z" fill="#e6dfc6" stroke="#84868e" stroke-width="0.7"/><path d="M3.2,1.4 L12.8,1.4 L12.8,12.8 L2.4,12.8 Z" fill="url(#sp5)" stroke="#84868e" stroke-width="0.8"/><path d="M12.8,1.0 Q15.4,0.8 15,3.8 L13.6,4 Q14,2.6 12.8,2.4 Z" fill="#b09452"/><rect x="5" y="4" width="5" height="1" fill="#7e7eb2" /><rect x="5" y="6" width="5" height="1" fill="#7e7eb2" /><rect x="5" y="8" width="5" height="1" fill="#7e7eb2" /><rect x="5" y="10" width="5" height="1" fill="#7e7eb2" /><rect x="0.5" y="12.2" width="9.4" height="3" rx="1.4" fill="url(#sr5)" stroke="#a08c58" stroke-width="0.8"/><rect x="1.6" y="13" width="7.2" height="0.9" fill="#fffdf0" /></g></svg></div>
<div style="left:105px;top:350px;width:103px;height:16px;background:#0a246a"></div>
<span class="t ui" style="left:107px;top:350px;height:16px;line-height:16px;letter-spacing:-0.211px;color:#fff;">Group Policy Objects</span>
<div class="ic" style="left:105px;top:366px"><svg width="16" height="16" viewBox="0 0 16 16" ><defs><linearGradient id="sp1" x1="0" y1="0" x2="1" y2="0"><stop offset="0" stop-color="#fffef6"/><stop offset="1" stop-color="#faeec2"/></linearGradient><linearGradient id="sr1" x1="0" y1="0" x2="0" y2="1"><stop offset="0" stop-color="#fff9dc"/><stop offset="1" stop-color="#efd684"/></linearGradient></defs><g transform="translate(0,0) scale(1.0)"><path d="M12.6,3.4 L13.3,3.4 L13.3,13 Q13.1,15 10.8,15 L9.8,13 L12.6,13 Z" fill="#e6dfc6" stroke="#84868e" stroke-width="0.7"/><path d="M3.2,1.4 L12.8,1.4 L12.8,12.8 L2.4,12.8 Z" fill="url(#sp1)" stroke="#84868e" stroke-width="0.8"/><path d="M12.8,1.0 Q15.4,0.8 15,3.8 L13.6,4 Q14,2.6 12.8,2.4 Z" fill="#b09452"/><rect x="5" y="4" width="5" height="1" fill="#7e7eb2" /><rect x="5" y="6" width="5" height="1" fill="#7e7eb2" /><rect x="5" y="8" width="5" height="1" fill="#7e7eb2" /><rect x="5" y="10" width="5" height="1" fill="#7e7eb2" /><rect x="0.5" y="12.2" width="9.4" height="3" rx="1.4" fill="url(#sr1)" stroke="#a08c58" stroke-width="0.8"/><rect x="1.6" y="13" width="7.2" height="0.9" fill="#fffdf0" /></g></svg></div>
<span class="t ui" style="left:126px;top:366px;height:16px;line-height:16px;letter-spacing:-0.400px;">Agent GPO</span>
<div class="ic" style="left:105px;top:382px"><svg width="16" height="16" viewBox="0 0 16 16" ><defs><linearGradient id="sp1" x1="0" y1="0" x2="1" y2="0"><stop offset="0" stop-color="#fffef6"/><stop offset="1" stop-color="#faeec2"/></linearGradient><linearGradient id="sr1" x1="0" y1="0" x2="0" y2="1"><stop offset="0" stop-color="#fff9dc"/><stop offset="1" stop-color="#efd684"/></linearGradient></defs><g transform="translate(0,0) scale(1.0)"><path d="M12.6,3.4 L13.3,3.4 L13.3,13 Q13.1,15 10.8,15 L9.8,13 L12.6,13 Z" fill="#e6dfc6" stroke="#84868e" stroke-width="0.7"/><path d="M3.2,1.4 L12.8,1.4 L12.8,12.8 L2.4,12.8 Z" fill="url(#sp1)" stroke="#84868e" stroke-width="0.8"/><path d="M12.8,1.0 Q15.4,0.8 15,3.8 L13.6,4 Q14,2.6 12.8,2.4 Z" fill="#b09452"/><rect x="5" y="4" width="5" height="1" fill="#7e7eb2" /><rect x="5" y="6" width="5" height="1" fill="#7e7eb2" /><rect x="5" y="8" width="5" height="1" fill="#7e7eb2" /><rect x="5" y="10" width="5" height="1" fill="#7e7eb2" /><rect x="0.5" y="12.2" width="9.4" height="3" rx="1.4" fill="url(#sr1)" stroke="#a08c58" stroke-width="0.8"/><rect x="1.6" y="13" width="7.2" height="0.9" fill="#fffdf0" /></g></svg></div>
<span class="t ui" style="left:126px;top:382px;height:16px;line-height:16px;letter-spacing:-0.200px;">Axence Remote Desktop</span>
<div class="ic" style="left:105px;top:398px"><svg width="16" height="16" viewBox="0 0 16 16" ><defs><linearGradient id="sp1" x1="0" y1="0" x2="1" y2="0"><stop offset="0" stop-color="#fffef6"/><stop offset="1" stop-color="#faeec2"/></linearGradient><linearGradient id="sr1" x1="0" y1="0" x2="0" y2="1"><stop offset="0" stop-color="#fff9dc"/><stop offset="1" stop-color="#efd684"/></linearGradient></defs><g transform="translate(0,0) scale(1.0)"><path d="M12.6,3.4 L13.3,3.4 L13.3,13 Q13.1,15 10.8,15 L9.8,13 L12.6,13 Z" fill="#e6dfc6" stroke="#84868e" stroke-width="0.7"/><path d="M3.2,1.4 L12.8,1.4 L12.8,12.8 L2.4,12.8 Z" fill="url(#sp1)" stroke="#84868e" stroke-width="0.8"/><path d="M12.8,1.0 Q15.4,0.8 15,3.8 L13.6,4 Q14,2.6 12.8,2.4 Z" fill="#b09452"/><rect x="5" y="4" width="5" height="1" fill="#7e7eb2" /><rect x="5" y="6" width="5" height="1" fill="#7e7eb2" /><rect x="5" y="8" width="5" height="1" fill="#7e7eb2" /><rect x="5" y="10" width="5" height="1" fill="#7e7eb2" /><rect x="0.5" y="12.2" width="9.4" height="3" rx="1.4" fill="url(#sr1)" stroke="#a08c58" stroke-width="0.8"/><rect x="1.6" y="13" width="7.2" height="0.9" fill="#fffdf0" /></g></svg></div>
<span class="t ui" style="left:125px;top:398px;height:16px;line-height:16px;letter-spacing:-0.188px;">Default Domain Controllers Policy</span>
<div class="ic" style="left:105px;top:414px"><svg width="16" height="16" viewBox="0 0 16 16" ><defs><linearGradient id="sp1" x1="0" y1="0" x2="1" y2="0"><stop offset="0" stop-color="#fffef6"/><stop offset="1" stop-color="#faeec2"/></linearGradient><linearGradient id="sr1" x1="0" y1="0" x2="0" y2="1"><stop offset="0" stop-color="#fff9dc"/><stop offset="1" stop-color="#efd684"/></linearGradient></defs><g transform="translate(0,0) scale(1.0)"><path d="M12.6,3.4 L13.3,3.4 L13.3,13 Q13.1,15 10.8,15 L9.8,13 L12.6,13 Z" fill="#e6dfc6" stroke="#84868e" stroke-width="0.7"/><path d="M3.2,1.4 L12.8,1.4 L12.8,12.8 L2.4,12.8 Z" fill="url(#sp1)" stroke="#84868e" stroke-width="0.8"/><path d="M12.8,1.0 Q15.4,0.8 15,3.8 L13.6,4 Q14,2.6 12.8,2.4 Z" fill="#b09452"/><rect x="5" y="4" width="5" height="1" fill="#7e7eb2" /><rect x="5" y="6" width="5" height="1" fill="#7e7eb2" /><rect x="5" y="8" width="5" height="1" fill="#7e7eb2" /><rect x="5" y="10" width="5" height="1" fill="#7e7eb2" /><rect x="0.5" y="12.2" width="9.4" height="3" rx="1.4" fill="url(#sr1)" stroke="#a08c58" stroke-width="0.8"/><rect x="1.6" y="13" width="7.2" height="0.9" fill="#fffdf0" /></g></svg></div>
<span class="t ui" style="left:125px;top:414px;height:16px;line-height:16px;letter-spacing:-0.270px;">Default Domain Policy</span>
<div class="ic" style="left:105px;top:430px"><svg width="16" height="16" viewBox="0 0 16 16" ><defs><linearGradient id="sp1" x1="0" y1="0" x2="1" y2="0"><stop offset="0" stop-color="#fffef6"/><stop offset="1" stop-color="#faeec2"/></linearGradient><linearGradient id="sr1" x1="0" y1="0" x2="0" y2="1"><stop offset="0" stop-color="#fff9dc"/><stop offset="1" stop-color="#efd684"/></linearGradient></defs><g transform="translate(0,0) scale(1.0)"><path d="M12.6,3.4 L13.3,3.4 L13.3,13 Q13.1,15 10.8,15 L9.8,13 L12.6,13 Z" fill="#e6dfc6" stroke="#84868e" stroke-width="0.7"/><path d="M3.2,1.4 L12.8,1.4 L12.8,12.8 L2.4,12.8 Z" fill="url(#sp1)" stroke="#84868e" stroke-width="0.8"/><path d="M12.8,1.0 Q15.4,0.8 15,3.8 L13.6,4 Q14,2.6 12.8,2.4 Z" fill="#b09452"/><rect x="5" y="4" width="5" height="1" fill="#7e7eb2" /><rect x="5" y="6" width="5" height="1" fill="#7e7eb2" /><rect x="5" y="8" width="5" height="1" fill="#7e7eb2" /><rect x="5" y="10" width="5" height="1" fill="#7e7eb2" /><rect x="0.5" y="12.2" width="9.4" height="3" rx="1.4" fill="url(#sr1)" stroke="#a08c58" stroke-width="0.8"/><rect x="1.6" y="13" width="7.2" height="0.9" fill="#fffdf0" /></g></svg></div>
<span class="t ui" style="left:125px;top:430px;height:16px;line-height:16px;letter-spacing:-0.143px;">Deploy Firefox Browser</span>
<div class="ic" style="left:105px;top:446px"><svg width="16" height="16" viewBox="0 0 16 16" ><defs><linearGradient id="sp1" x1="0" y1="0" x2="1" y2="0"><stop offset="0" stop-color="#fffef6"/><stop offset="1" stop-color="#faeec2"/></linearGradient><linearGradient id="sr1" x1="0" y1="0" x2="0" y2="1"><stop offset="0" stop-color="#fff9dc"/><stop offset="1" stop-color="#efd684"/></linearGradient></defs><g transform="translate(0,0) scale(1.0)"><path d="M12.6,3.4 L13.3,3.4 L13.3,13 Q13.1,15 10.8,15 L9.8,13 L12.6,13 Z" fill="#e6dfc6" stroke="#84868e" stroke-width="0.7"/><path d="M3.2,1.4 L12.8,1.4 L12.8,12.8 L2.4,12.8 Z" fill="url(#sp1)" stroke="#84868e" stroke-width="0.8"/><path d="M12.8,1.0 Q15.4,0.8 15,3.8 L13.6,4 Q14,2.6 12.8,2.4 Z" fill="#b09452"/><rect x="5" y="4" width="5" height="1" fill="#7e7eb2" /><rect x="5" y="6" width="5" height="1" fill="#7e7eb2" /><rect x="5" y="8" width="5" height="1" fill="#7e7eb2" /><rect x="5" y="10" width="5" height="1" fill="#7e7eb2" /><rect x="0.5" y="12.2" width="9.4" height="3" rx="1.4" fill="url(#sr1)" stroke="#a08c58" stroke-width="0.8"/><rect x="1.6" y="13" width="7.2" height="0.9" fill="#fffdf0" /></g></svg></div>
<span class="t ui" style="left:126px;top:446px;height:16px;line-height:16px;letter-spacing:-0.333px;">WMI Enable</span>
<div style="left:71px;top:466px;width:9px;height:9px;box-sizing:border-box;border:1px solid #808080;background:#fff"><i style="left:1px;top:3px;width:5px;height:1px;background:#000"></i><i style="left:3px;top:1px;width:1px;height:5px;background:#000"></i></div>
<div class="ic" style="left:86px;top:462px"><svg width="16" height="16" viewBox="0 0 16 16" ><defs><linearGradient id="fg" x1="0" y1="0" x2="1" y2="1"><stop offset="0" stop-color="#fef2bc"/><stop offset="1" stop-color="#f4d67e"/></linearGradient></defs><g transform="translate(0.2,1)"><path d="M6.4,3.4 L6.4,1.2 Q6.4,0.5 7.2,0.5 L12.6,0.5 Q13.5,0.5 13.5,1.4 L13.5,3.6 Z" fill="#f3d684" stroke="#cfa850" stroke-width="0.7"/><rect x="8.4" y="1.1" width="4.2" height="1.2" fill="#ffffff" /><rect x="10.8" y="1.1" width="1.9" height="1.2" fill="#4a94e6" /><path d="M0.5,2.8 Q0.5,1.8 1.5,1.8 L5.4,1.8 L7,3.5 L13.5,3.5 L13.5,12.5 L0.5,12.5 Z" fill="url(#fg)" stroke="#d3ac54" stroke-width="0.7"/><rect x="9.6" y="4" width="2.4" height="8" fill="#fff4c8" opacity="0.45"/><rect x="0.8" y="12.1" width="12.6" height="0.9" fill="#c9a040" /></g><path d="M7.2,9 L16,9 L13,13.6 L13,15.6 L11,15.6 L11,13.6 Z" fill="#7890a0" stroke="#5c7484" stroke-width="0.5"/><path d="M9.4,9.6 L14.6,9.6 L12.4,13 L11.6,13 Z" fill="#b4c4d0"/><rect x="8.3" y="5.5" width="7.6" height="3.5" fill="#f6f6f8" stroke="#b0b4bc" stroke-width="0.6" rx="0.8"/><rect x="10.2" y="7" width="3.2" height="0.9" fill="#8c90b4" /></svg></div>
<span class="t ui" style="left:107px;top:462px;height:16px;line-height:16px;letter-spacing:-0.200px;">WMI Filters</span>
<div style="left:71px;top:482px;width:9px;height:9px;box-sizing:border-box;border:1px solid #808080;background:#fff"><i style="left:1px;top:3px;width:5px;height:1px;background:#000"></i><i style="left:3px;top:1px;width:1px;height:5px;background:#000"></i></div>
<div class="ic" style="left:86px;top:478px"><svg width="16" height="16" viewBox="0 0 16 16" ><defs><linearGradient id="fg" x1="0" y1="0" x2="1" y2="1"><stop offset="0" stop-color="#fef2bc"/><stop offset="1" stop-color="#f4d67e"/></linearGradient></defs><g transform="translate(0.2,1)"><path d="M6.4,3.4 L6.4,1.2 Q6.4,0.5 7.2,0.5 L12.6,0.5 Q13.5,0.5 13.5,1.4 L13.5,3.6 Z" fill="#f3d684" stroke="#cfa850" stroke-width="0.7"/><rect x="8.4" y="1.1" width="4.2" height="1.2" fill="#ffffff" /><rect x="10.8" y="1.1" width="1.9" height="1.2" fill="#4a94e6" /><path d="M0.5,2.8 Q0.5,1.8 1.5,1.8 L5.4,1.8 L7,3.5 L13.5,3.5 L13.5,12.5 L0.5,12.5 Z" fill="url(#fg)" stroke="#d3ac54" stroke-width="0.7"/><rect x="9.6" y="4" width="2.4" height="8" fill="#fff4c8" opacity="0.45"/><rect x="0.8" y="12.1" width="12.6" height="0.9" fill="#c9a040" /></g><rect x="5.4" y="5" width="10.4" height="10.6" fill="#f2f4f8" stroke="#70747c" stroke-width="0.9"/><rect x="5" y="3" width="11.2" height="2.6" fill="#9c6444" rx="0.8"/><rect x="7.7" y="6.3" width="5.4" height="6" fill="#b4d4fc" stroke="#6c8cc4" stroke-width="0.6"/><rect x="8.8" y="7.9" width="3.2" height="1" fill="#3c64b4" /><rect x="8.8" y="10" width="3.2" height="1" fill="#3c64b4" /><rect x="6.4" y="13.2" width="8.4" height="1.6" fill="#8c98b0" /><rect x="7.4" y="13.6" width="3.4" height="0.8" fill="#d0dcf4" /><rect x="14" y="6" width="1.2" height="7" fill="#c4c8d0" /></svg></div>
<span class="t ui" style="left:106px;top:478px;height:16px;line-height:16px;letter-spacing:-0.200px;">Starter GPOs</span>
<div style="left:33px;top:498px;width:9px;height:9px;box-sizing:border-box;border:1px solid #808080;background:#fff"><i style="left:1px;top:3px;width:5px;height:1px;background:#000"></i><i style="left:3px;top:1px;width:1px;height:5px;background:#000"></i></div>
<div class="ic" style="left:48px;top:494px"><svg width="16" height="16" viewBox="0 0 16 16" ><defs><linearGradient id="fg" x1="0" y1="0" x2="1" y2="1"><stop offset="0" stop-color="#fef2bc"/><stop offset="1" stop-color="#f4d67e"/></linearGradient></defs><g transform="translate(0.2,1)"><path d="M6.4,3.4 L6.4,1.2 Q6.4,0.5 7.2,0.5 L12.6,0.5 Q13.5,0.5 13.5,1.4 L13.5,3.6 Z" fill="#f3d684" stroke="#cfa850" stroke-width="0.7"/><rect x="8.4" y="1.1" width="4.2" height="1.2" fill="#ffffff" /><rect x="10.8" y="1.1" width="1.9" height="1.2" fill="#4a94e6" /><path d="M0.5,2.8 Q0.5,1.8 1.5,1.8 L5.4,1.8 L7,3.5 L13.5,3.5 L13.5,12.5 L0.5,12.5 Z" fill="url(#fg)" stroke="#d3ac54" stroke-width="0.7"/><rect x="9.6" y="4" width="2.4" height="8" fill="#fff4c8" opacity="0.45"/><rect x="0.8" y="12.1" width="12.6" height="0.9" fill="#c9a040" /></g><rect x="7.3" y="5.9" width="8.6" height="9.8" fill="#1e7ada" /><rect x="8.4" y="7" width="2.6" height="2.2" fill="#b4dcff" /><rect x="12" y="7" width="2.8" height="2.2" fill="#6cb0f4" /><rect x="8.4" y="10" width="2.6" height="2.2" fill="#d4ecff" /><rect x="12" y="10" width="2.8" height="2.2" fill="#58a4f0" /><rect x="8.4" y="13.2" width="1.8" height="2.5" fill="#5ca8f0" /><rect x="10.6" y="12.8" width="5.3" height="2.9" fill="#1434a0" /><rect x="11" y="13" width="2" height="0.9" fill="#e8f4ff" /></svg></div>
<span class="t ui" style="left:68px;top:494px;height:16px;line-height:16px;letter-spacing:-0.050px;">Sites</span>
<div class="ic" style="left:48px;top:510px"><svg width="16" height="16" viewBox="0 0 16 16" ><defs><linearGradient id="fg" x1="0" y1="0" x2="1" y2="1"><stop offset="0" stop-color="#fef2bc"/><stop offset="1" stop-color="#f4d67e"/></linearGradient></defs><g transform="translate(1.2,-0.6) scale(0.7,0.85)"><g transform="translate(0,0)"><path d="M6.4,3.4 L6.4,1.2 Q6.4,0.5 7.2,0.5 L12.6,0.5 Q13.5,0.5 13.5,1.4 L13.5,3.6 Z" fill="#f3d684" stroke="#cfa850" stroke-width="0.7"/><rect x="8.4" y="1.1" width="4.2" height="1.2" fill="#ffffff" /><rect x="10.8" y="1.1" width="1.9" height="1.2" fill="#4a94e6" /><path d="M0.5,2.8 Q0.5,1.8 1.5,1.8 L5.4,1.8 L7,3.5 L13.5,3.5 L13.5,12.5 L0.5,12.5 Z" fill="url(#fg)" stroke="#d3ac54" stroke-width="0.7"/><rect x="9.6" y="4" width="2.4" height="8" fill="#fff4c8" opacity="0.45"/><rect x="0.8" y="12.1" width="12.6" height="0.9" fill="#c9a040" /></g></g><rect x="9.4" y="2.4" width="6.2" height="5.6" fill="#dfe3ee" stroke="#8c90a0" stroke-width="0.7"/><rect x="10.2" y="3.2" width="2.6" height="3.6" fill="#1830b8" /><rect x="12.8" y="3.2" width="2" height="3.6" fill="#f4f6ff" /><rect x="13.4" y="4.2" width="1" height="1" fill="#202030" /><rect x="7" y="3.2" width="2.2" height="3.4" fill="#9ca4ac" /><rect x="7.5" y="3.8" width="1.2" height="1.2" fill="#30d020" /><rect x="4.4" y="6.1" width="8.8" height="7" fill="#d8dce8" stroke="#8c90a0" stroke-width="0.7"/><rect x="5.2" y="6.9" width="2.8" height="5.4" fill="#1428b4" /><rect x="8" y="6.9" width="2.4" height="5.4" fill="#f8f9ff" /><rect x="10.4" y="6.9" width="2" height="5.4" fill="#6088ec" /><rect x="8.8" y="8.2" width="1" height="1.2" fill="#181828" /><rect x="7.8" y="13.2" width="2.2" height="1.4" fill="#a4a8b0" /><rect x="6.2" y="14.6" width="5.4" height="0.9" fill="#c8ccd4" /><rect x="0.2" y="7.7" width="3.2" height="8" fill="#b8bcc0" stroke="#7c8088" stroke-width="0.6" rx="0.8"/><rect x="0.9" y="8.7" width="1.8" height="1.6" fill="#38dc28" /><rect x="0.9" y="11" width="1.8" height="0.8" fill="#8c9096" /></svg></div>
<span class="t ui" style="left:69px;top:510px;height:16px;line-height:16px;letter-spacing:-0.300px;">Group Policy Modeling</span>
<div class="ic" style="left:48px;top:526px"><svg width="16" height="16" viewBox="0 0 16 16" ><defs><linearGradient id="fg" x1="0" y1="0" x2="1" y2="1"><stop offset="0" stop-color="#fef2bc"/><stop offset="1" stop-color="#f4d67e"/></linearGradient></defs><g transform="translate(0.2,1)"><path d="M6.4,3.4 L6.4,1.2 Q6.4,0.5 7.2,0.5 L12.6,0.5 Q13.5,0.5 13.5,1.4 L13.5,3.6 Z" fill="#f3d684" stroke="#cfa850" stroke-width="0.7"/><rect x="8.4" y="1.1" width="4.2" height="1.2" fill="#ffffff" /><rect x="10.8" y="1.1" width="1.9" height="1.2" fill="#4a94e6" /><path d="M0.5,2.8 Q0.5,1.8 1.5,1.8 L5.4,1.8 L7,3.5 L13.5,3.5 L13.5,12.5 L0.5,12.5 Z" fill="url(#fg)" stroke="#d3ac54" stroke-width="0.7"/><rect x="9.6" y="4" width="2.4" height="8" fill="#fff4c8" opacity="0.45"/><rect x="0.8" y="12.1" width="12.6" height="0.9" fill="#c9a040" /></g><path d="M7.6,6.4 L13.6,6.4 L15.7,8.5 L15.7,15.7 L7.6,15.7 Z" fill="#ffffff" stroke="#9094a0" stroke-width="0.8"/><path d="M13.6,6.4 L13.6,8.5 L15.7,8.5" fill="#e4e6ea" stroke="#9094a0" stroke-width="0.6"/><path d="M8.8,9.6 L10,11.4 L11.8,8.2" fill="none" stroke="#2c64d0" stroke-width="1.05"/><rect x="12.2" y="10.4" width="2.2" height="0.8" fill="#7c70b4" /><rect x="10.4" y="12.6" width="1.4" height="0.8" fill="#b0b4c0" /><rect x="12.2" y="13.4" width="2.2" height="0.8" fill="#7c70b4" /></svg></div>
<span class="t ui" style="left:69px;top:526px;height:16px;line-height:16px;letter-spacing:-0.316px;">Group Policy Results</span>
<div style="left:291px;top:76px;width:853px;height:731px;background:#d4d0c8;box-sizing:border-box;border:1px solid;border-color:#808080 #ffffff #ffffff #808080;box-shadow:inset 1px 1px 0 #404040,inset -1px -1px 0 #d4d0c8"></div>
<span class="t hd" style="left:296px;top:80px;height:18px;line-height:18px;letter-spacing:0.171px;">Group Policy Objects in axencesoftware.com</span>
<div style="left:296px;top:120px;width:843px;height:682px;box-sizing:border-box;border:1px solid;border-color:#ffffff #404040 #404040 #ffffff;box-shadow:inset -1px -1px 0 #808080"></div>
<div style="left:296px;top:100px;width:58px;height:21px;background:#d4d0c8;box-sizing:border-box;border:1px solid;border-color:#ffffff #404040 #d4d0c8 #ffffff;border-bottom:0;border-radius:2px 2px 0 0;box-shadow:inset -1px 0 0 #808080"></div>
<div style="left:354px;top:102px;width:61px;height:18px;background:#d4d0c8;box-sizing:border-box;border:1px solid;border-color:#ffffff #404040 #d4d0c8 #d4d0c8;border-bottom:0;border-radius:2px 2px 0 0;box-shadow:inset -1px 0 0 #808080"></div>
<span class="t ls" style="left:303px;top:102px;height:17px;line-height:17px;letter-spacing:-0.229px;">Contents</span>
<span class="t ls" style="left:358px;top:104px;height:17px;line-height:17px;letter-spacing:-0.244px;">Delegation</span>
<div style="left:305px;top:127px;width:825px;height:666px;background:#fff;box-sizing:border-box;border:1px solid;border-color:#808080 #ffffff #ffffff #808080;box-shadow:inset 1px 1px 0 #404040,inset -1px -1px 0 #d4d0c8"></div>
<div style="left:307px;top:129px;width:173px;height:17px;background:#d4d0c8;box-shadow:inset 1px 1px 0 #ffffff,inset -1px -1px 0 #404040,inset -2px -2px 0 #808080"></div>
<span class="t ls" style="left:313px;top:130px;height:17px;line-height:17px;letter-spacing:-0.333px;">Name</span>
<div style="left:480px;top:129px;width:114px;height:17px;background:#d4d0c8;box-shadow:inset 1px 1px 0 #ffffff,inset -1px -1px 0 #404040,inset -2px -2px 0 #808080"></div>
<span class="t ls" style="left:486px;top:130px;height:17px;line-height:17px;letter-spacing:-0.400px;">GPO Status</span>
<div style="left:594px;top:129px;width:106px;height:17px;background:#d4d0c8;box-shadow:inset 1px 1px 0 #ffffff,inset -1px -1px 0 #404040,inset -2px -2px 0 #808080"></div>
<span class="t ls" style="left:600px;top:130px;height:17px;line-height:17px;letter-spacing:-0.333px;">WMI Filter</span>
<div style="left:700px;top:129px;width:98px;height:17px;background:#d4d0c8;box-shadow:inset 1px 1px 0 #ffffff,inset -1px -1px 0 #404040,inset -2px -2px 0 #808080"></div>
<span class="t ls" style="left:706px;top:130px;height:17px;line-height:17px;letter-spacing:-0.171px;">Modified</span>
<div style="left:798px;top:129px;width:89px;height:17px;background:#d4d0c8;box-shadow:inset 1px 1px 0 #ffffff,inset -1px -1px 0 #404040,inset -2px -2px 0 #808080"></div>
<span class="t ls" style="left:804px;top:130px;height:17px;line-height:17px;letter-spacing:-0.400px;">Owner</span>
<div style="left:887px;top:129px;width:241px;height:17px;background:#d4d0c8;box-shadow:inset 1px 1px 0 #ffffff,inset -1px -1px 0 #404040,inset -2px -2px 0 #808080"></div>
<svg style="position:absolute;left:349px;top:135px" width="9" height="5" viewBox="0 0 9 5"><path d="M0,4.5 L4.5,0 L9,4.5 Z" fill="#a0a0a0"/></svg>
<div style="left:327px;top:146px;width:560px;height:17px;background:#d4d0c8"></div>
<div class="ic" style="left:311px;top:146px"><svg width="16" height="16" viewBox="0 0 16 16" ><defs><linearGradient id="sp2" x1="0" y1="0" x2="1" y2="0"><stop offset="0" stop-color="#c6cad6"/><stop offset="1" stop-color="#b4b8c8"/></linearGradient><linearGradient id="sr2" x1="0" y1="0" x2="0" y2="1"><stop offset="0" stop-color="#d4d4d0"/><stop offset="1" stop-color="#b8b49c"/></linearGradient></defs><g transform="translate(0,0) scale(1.0)"><path d="M12.6,3.4 L13.3,3.4 L13.3,13 Q13.1,15 10.8,15 L9.8,13 L12.6,13 Z" fill="#aab0c0" stroke="#7a84a0" stroke-width="0.7"/><path d="M3.2,1.4 L12.8,1.4 L12.8,12.8 L2.4,12.8 Z" fill="url(#sp2)" stroke="#7a84a0" stroke-width="0.8"/><path d="M12.8,1.0 Q15.4,0.8 15,3.8 L13.6,4 Q14,2.6 12.8,2.4 Z" fill="#8c8468"/><rect x="5" y="4" width="5" height="1" fill="#6a6c9c" /><rect x="5" y="6" width="5" height="1" fill="#6a6c9c" /><rect x="5" y="8" width="5" height="1" fill="#6a6c9c" /><rect x="5" y="10" width="5" height="1" fill="#6a6c9c" /><rect x="0.5" y="12.2" width="9.4" height="3" rx="1.4" fill="url(#sr2)" stroke="#8088a0" stroke-width="0.8"/><rect x="1.6" y="13" width="7.2" height="0.9" fill="#fffdf0" /></g></svg></div>
<span class="t ls" style="left:329px;top:147px;height:17px;line-height:17px;letter-spacing:-0.375px;">Agent GPO</span>
<span class="t ls" style="left:486px;top:147px;height:17px;line-height:17px;letter-spacing:-0.333px;">Enabled</span>
<span class="t ls" style="left:600px;top:147px;height:17px;line-height:17px;letter-spacing:-0.400px;">None</span>
<span class="t ls" style="left:706px;top:147px;height:17px;line-height:17px;letter-spacing:0.188px;">12/4/2009 5:09...</span>
<span class="t ls" style="left:804px;top:147px;height:17px;line-height:17px;letter-spacing:-0.257px;">Domain Admin...</span>
<div class="ic" style="left:311px;top:163px"><svg width="16" height="16" viewBox="0 0 16 16" ><defs><linearGradient id="sp1" x1="0" y1="0" x2="1" y2="0"><stop offset="0" stop-color="#fffef6"/><stop offset="1" stop-color="#faeec2"/></linearGradient><linearGradient id="sr1" x1="0" y1="0" x2="0" y2="1"><stop offset="0" stop-color="#fff9dc"/><stop offset="1" stop-color="#efd684"/></linearGradient></defs><g transform="translate(0,0) scale(1.0)"><path d="M12.6,3.4 L13.3,3.4 L13.3,13 Q13.1,15 10.8,15 L9.8,13 L12.6,13 Z" fill="#e6dfc6" stroke="#84868e" stroke-width="0.7"/><path d="M3.2,1.4 L12.8,1.4 L12.8,12.8 L2.4,12.8 Z" fill="url(#sp1)" stroke="#84868e" stroke-width="0.8"/><path d="M12.8,1.0 Q15.4,0.8 15,3.8 L13.6,4 Q14,2.6 12.8,2.4 Z" fill="#b09452"/><rect x="5" y="4" width="5" height="1" fill="#7e7eb2" /><rect x="5" y="6" width="5" height="1" fill="#7e7eb2" /><rect x="5" y="8" width="5" height="1" fill="#7e7eb2" /><rect x="5" y="10" width="5" height="1" fill="#7e7eb2" /><rect x="0.5" y="12.2" width="9.4" height="3" rx="1.4" fill="url(#sr1)" stroke="#a08c58" stroke-width="0.8"/><rect x="1.6" y="13" width="7.2" height="0.9" fill="#fffdf0" /></g></svg></div>
<span class="t ls" style="left:329px;top:164px;height:17px;line-height:17px;letter-spacing:-0.190px;">Axence Remote Desktop</span>
<span class="t ls" style="left:486px;top:164px;height:17px;line-height:17px;letter-spacing:-0.333px;">Enabled</span>
<span class="t ls" style="left:600px;top:164px;height:17px;line-height:17px;letter-spacing:-0.400px;">None</span>
<span class="t ls" style="left:706px;top:164px;height:17px;line-height:17px;letter-spacing:0.188px;">3/22/2010 3:39...</span>
<span class="t ls" style="left:804px;top:164px;height:17px;line-height:17px;letter-spacing:-0.337px;">Administrator2...</span>
<div class="ic" style="left:311px;top:180px"><svg width="16" height="16" viewBox="0 0 16 16" ><defs><linearGradient id="sp1" x1="0" y1="0" x2="1" y2="0"><stop offset="0" stop-color="#fffef6"/><stop offset="1" stop-color="#faeec2"/></linearGradient><linearGradient id="sr1" x1="0" y1="0" x2="0" y2="1"><stop offset="0" stop-color="#fff9dc"/><stop offset="1" stop-color="#efd684"/></linearGradient></defs><g transform="translate(0,0) scale(1.0)"><path d="M12.6,3.4 L13.3,3.4 L13.3,13 Q13.1,15 10.8,15 L9.8,13 L12.6,13 Z" fill="#e6dfc6" stroke="#84868e" stroke-width="0.7"/><path d="M3.2,1.4 L12.8,1.4 L12.8,12.8 L2.4,12.8 Z" fill="url(#sp1)" stroke="#84868e" stroke-width="0.8"/><path d="M12.8,1.0 Q15.4,0.8 15,3.8 L13.6,4 Q14,2.6 12.8,2.4 Z" fill="#b09452"/><rect x="5" y="4" width="5" height="1" fill="#7e7eb2" /><rect x="5" y="6" width="5" height="1" fill="#7e7eb2" /><rect x="5" y="8" width="5" height="1" fill="#7e7eb2" /><rect x="5" y="10" width="5" height="1" fill="#7e7eb2" /><rect x="0.5" y="12.2" width="9.4" height="3" rx="1.4" fill="url(#sr1)" stroke="#a08c58" stroke-width="0.8"/><rect x="1.6" y="13" width="7.2" height="0.9" fill="#fffdf0" /></g></svg></div>
<span class="t ls" style="left:329px;top:181px;height:17px;line-height:17px;letter-spacing:-0.207px;">Default Domain Controllers P...</span>
<span class="t ls" style="left:486px;top:181px;height:17px;line-height:17px;letter-spacing:-0.333px;">Enabled</span>
<span class="t ls" style="left:600px;top:181px;height:17px;line-height:17px;letter-spacing:-0.400px;">None</span>
<span class="t ls" style="left:706px;top:181px;height:17px;line-height:17px;letter-spacing:0.188px;">10/13/2009 5:4...</span>
<span class="t ls" style="left:804px;top:181px;height:17px;line-height:17px;letter-spacing:-0.257px;">Domain Admin...</span>
<div class="ic" style="left:311px;top:197px"><svg width="16" height="16" viewBox="0 0 16 16" ><defs><linearGradient id="sp1" x1="0" y1="0" x2="1" y2="0"><stop offset="0" stop-color="#fffef6"/><stop offset="1" stop-color="#faeec2"/></linearGradient><linearGradient id="sr1" x1="0" y1="0" x2="0" y2="1"><stop offset="0" stop-color="#fff9dc"/><stop offset="1" stop-color="#efd684"/></linearGradient></defs><g transform="translate(0,0) scale(1.0)"><path d="M12.6,3.4 L13.3,3.4 L13.3,13 Q13.1,15 10.8,15 L9.8,13 L12.6,13 Z" fill="#e6dfc6" stroke="#84868e" stroke-width="0.7"/><path d="M3.2,1.4 L12.8,1.4 L12.8,12.8 L2.4,12.8 Z" fill="url(#sp1)" stroke="#84868e" stroke-width="0.8"/><path d="M12.8,1.0 Q15.4,0.8 15,3.8 L13.6,4 Q14,2.6 12.8,2.4 Z" fill="#b09452"/><rect x="5" y="4" width="5" height="1" fill="#7e7eb2" /><rect x="5" y="6" width="5" height="1" fill="#7e7eb2" /><rect x="5" y="8" width="5" height="1" fill="#7e7eb2" /><rect x="5" y="10" width="5" height="1" fill="#7e7eb2" /><rect x="0.5" y="12.2" width="9.4" height="3" rx="1.4" fill="url(#sr1)" stroke="#a08c58" stroke-width="0.8"/><rect x="1.6" y="13" width="7.2" height="0.9" fill="#fffdf0" /></g></svg></div>
<span class="t ls" style="left:329px;top:198px;height:17px;line-height:17px;letter-spacing:-0.270px;">Default Domain Policy</span>
<span class="t ls" style="left:486px;top:198px;height:17px;line-height:17px;letter-spacing:-0.333px;">Enabled</span>
<span class="t ls" style="left:600px;top:198px;height:17px;line-height:17px;letter-spacing:-0.400px;">None</span>
<span class="t ls" style="left:706px;top:198px;height:17px;line-height:17px;letter-spacing:0.188px;">10/13/2009 5:0...</span>
<span class="t ls" style="left:804px;top:198px;height:17px;line-height:17px;letter-spacing:-0.257px;">Domain Admin...</span>
<div class="ic" style="left:311px;top:214px"><svg width="16" height="16" viewBox="0 0 16 16" ><defs><linearGradient id="sp1" x1="0" y1="0" x2="1" y2="0"><stop offset="0" stop-color="#fffef6"/><stop offset="1" stop-color="#faeec2"/></linearGradient><linearGradient id="sr1" x1="0" y1="0" x2="0" y2="1"><stop offset="0" stop-color="#fff9dc"/><stop offset="1" stop-color="#efd684"/></linearGradient></defs><g transform="translate(0,0) scale(1.0)"><path d="M12.6,3.4 L13.3,3.4 L13.3,13 Q13.1,15 10.8,15 L9.8,13 L12.6,13 Z" fill="#e6dfc6" stroke="#84868e" stroke-width="0.7"/><path d="M3.2,1.4 L12.8,1.4 L12.8,12.8 L2.4,12.8 Z" fill="url(#sp1)" stroke="#84868e" stroke-width="0.8"/><path d="M12.8,1.0 Q15.4,0.8 15,3.8 L13.6,4 Q14,2.6 12.8,2.4 Z" fill="#b09452"/><rect x="5" y="4" width="5" height="1" fill="#7e7eb2" /><rect x="5" y="6" width="5" height="1" fill="#7e7eb2" /><rect x="5" y="8" width="5" height="1" fill="#7e7eb2" /><rect x="5" y="10" width="5" height="1" fill="#7e7eb2" /><rect x="0.5" y="12.2" width="9.4" height="3" rx="1.4" fill="url(#sr1)" stroke="#a08c58" stroke-width="0.8"/><rect x="1.6" y="13" width="7.2" height="0.9" fill="#fffdf0" /></g></svg></div>
<span class="t ls" style="left:329px;top:215px;height:17px;line-height:17px;letter-spacing:-0.314px;">Deploy Firefox Browser</span>
<span class="t ls" style="left:486px;top:215px;height:17px;line-height:17px;letter-spacing:-0.333px;">Enabled</span>
<span class="t ls" style="left:600px;top:215px;height:17px;line-height:17px;letter-spacing:-0.400px;">None</span>
<span class="t ls" style="left:706px;top:215px;height:17px;line-height:17px;letter-spacing:0.188px;">10/16/2009 4:0...</span>
<span class="t ls" style="left:804px;top:215px;height:17px;line-height:17px;letter-spacing:-0.257px;">Domain Admin...</span>
<div class="ic" style="left:311px;top:231px"><svg width="16" height="16" viewBox="0 0 16 16" ><defs><linearGradient id="sp1" x1="0" y1="0" x2="1" y2="0"><stop offset="0" stop-color="#fffef6"/><stop offset="1" stop-color="#faeec2"/></linearGradient><linearGradient id="sr1" x1="0" y1="0" x2="0" y2="1"><stop offset="0" stop-color="#fff9dc"/><stop offset="1" stop-color="#efd684"/></linearGradient></defs><g transform="translate(0,0) scale(1.0)"><path d="M12.6,3.4 L13.3,3.4 L13.3,13 Q13.1,15 10.8,15 L9.8,13 L12.6,13 Z" fill="#e6dfc6" stroke="#84868e" stroke-width="0.7"/><path d="M3.2,1.4 L12.8,1.4 L12.8,12.8 L2.4,12.8 Z" fill="url(#sp1)" stroke="#84868e" stroke-width="0.8"/><path d="M12.8,1.0 Q15.4,0.8 15,3.8 L13.6,4 Q14,2.6 12.8,2.4 Z" fill="#b09452"/><rect x="5" y="4" width="5" height="1" fill="#7e7eb2" /><rect x="5" y="6" width="5" height="1" fill="#7e7eb2" /><rect x="5" y="8" width="5" height="1" fill="#7e7eb2" /><rect x="5" y="10" width="5" height="1" fill="#7e7eb2" /><rect x="0.5" y="12.2" width="9.4" height="3" rx="1.4" fill="url(#sr1)" stroke="#a08c58" stroke-width="0.8"/><rect x="1.6" y="13" width="7.2" height="0.9" fill="#fffdf0" /></g></svg></div>
<span class="t ls" style="left:329px;top:232px;height:17px;line-height:17px;letter-spacing:-0.200px;">WMI Enable</span>
<span class="t ls" style="left:486px;top:232px;height:17px;line-height:17px;letter-spacing:-0.333px;">Enabled</span>
<span class="t ls" style="left:600px;top:232px;height:17px;line-height:17px;letter-spacing:-0.400px;">None</span>
<span class="t ls" style="left:706px;top:232px;height:17px;line-height:17px;letter-spacing:0.188px;">1/19/2010 5:35...</span>
<span class="t ls" style="left:804px;top:232px;height:17px;line-height:17px;letter-spacing:-0.257px;">Domain Admin...</span>
<div style="left:5px;top:809px;width:919px;height:18px;box-shadow:inset 1px 1px 0 #808080,inset -1px -1px 0 #ffffff"></div>
<div style="left:926px;top:809px;width:131px;height:18px;box-shadow:inset 1px 1px 0 #808080,inset -1px -1px 0 #ffffff"></div>
<div style="left:1059px;top:809px;width:83px;height:18px;box-shadow:inset 1px 1px 0 #808080,inset -1px -1px 0 #ffffff"></div>
<span class="t ui" style="left:6px;top:810px;height:16px;line-height:16px;letter-spacing:-0.238px;">Create an unlinked GPO</span>
<div style="left:208px;top:359px;width:177px;height:169px;background:#d4d0c8;box-sizing:border-box;border:1px solid #808080"></div>
<div style="left:209px;top:362px;width:175px;height:17px;background:#0a246a;box-sizing:border-box;border:3px solid #ee1c24"></div>
<span class="t ui" style="left:227px;top:362px;height:17px;line-height:17px;letter-spacing:-0.300px;color:#fff;">New</span>
<span class="t ui" style="left:227px;top:379px;height:17px;line-height:17px;letter-spacing:-0.108px;">Back Up All...</span>
<span class="t ui" style="left:227px;top:396px;height:17px;line-height:17px;letter-spacing:-0.150px;">Manage Backups...</span>
<span class="t ui" style="left:227px;top:413px;height:17px;line-height:17px;letter-spacing:-0.185px;">Open Migration Table Editor</span>
<span class="t ui" style="left:227px;top:439px;height:17px;line-height:17px;letter-spacing:-0.400px;">View</span>
<span class="t ui" style="left:227px;top:456px;height:17px;line-height:17px;letter-spacing:-0.158px;">New Window from Here</span>
<span class="t ui" style="left:227px;top:482px;height:17px;line-height:17px;letter-spacing:0.067px;">Refresh</span>
<span class="t ui" style="left:227px;top:508px;height:17px;line-height:17px;letter-spacing:-0.267px;">Help</span>
<div style="left:212px;top:433px;width:169px;height:1px;background:#808080"></div>
<div style="left:212px;top:434px;width:169px;height:1px;background:#ffffff"></div>
<div style="left:212px;top:476px;width:169px;height:1px;background:#808080"></div>
<div style="left:212px;top:477px;width:169px;height:1px;background:#ffffff"></div>
<div style="left:212px;top:502px;width:169px;height:1px;background:#808080"></div>
<div style="left:212px;top:503px;width:169px;height:1px;background:#ffffff"></div>
<svg style="position:absolute;left:372px;top:443px" width="4" height="7" viewBox="0 0 4 7"><path d="M0,0 L4,3.5 L0,7 Z" fill="#000"/></svg>
</body></html>
